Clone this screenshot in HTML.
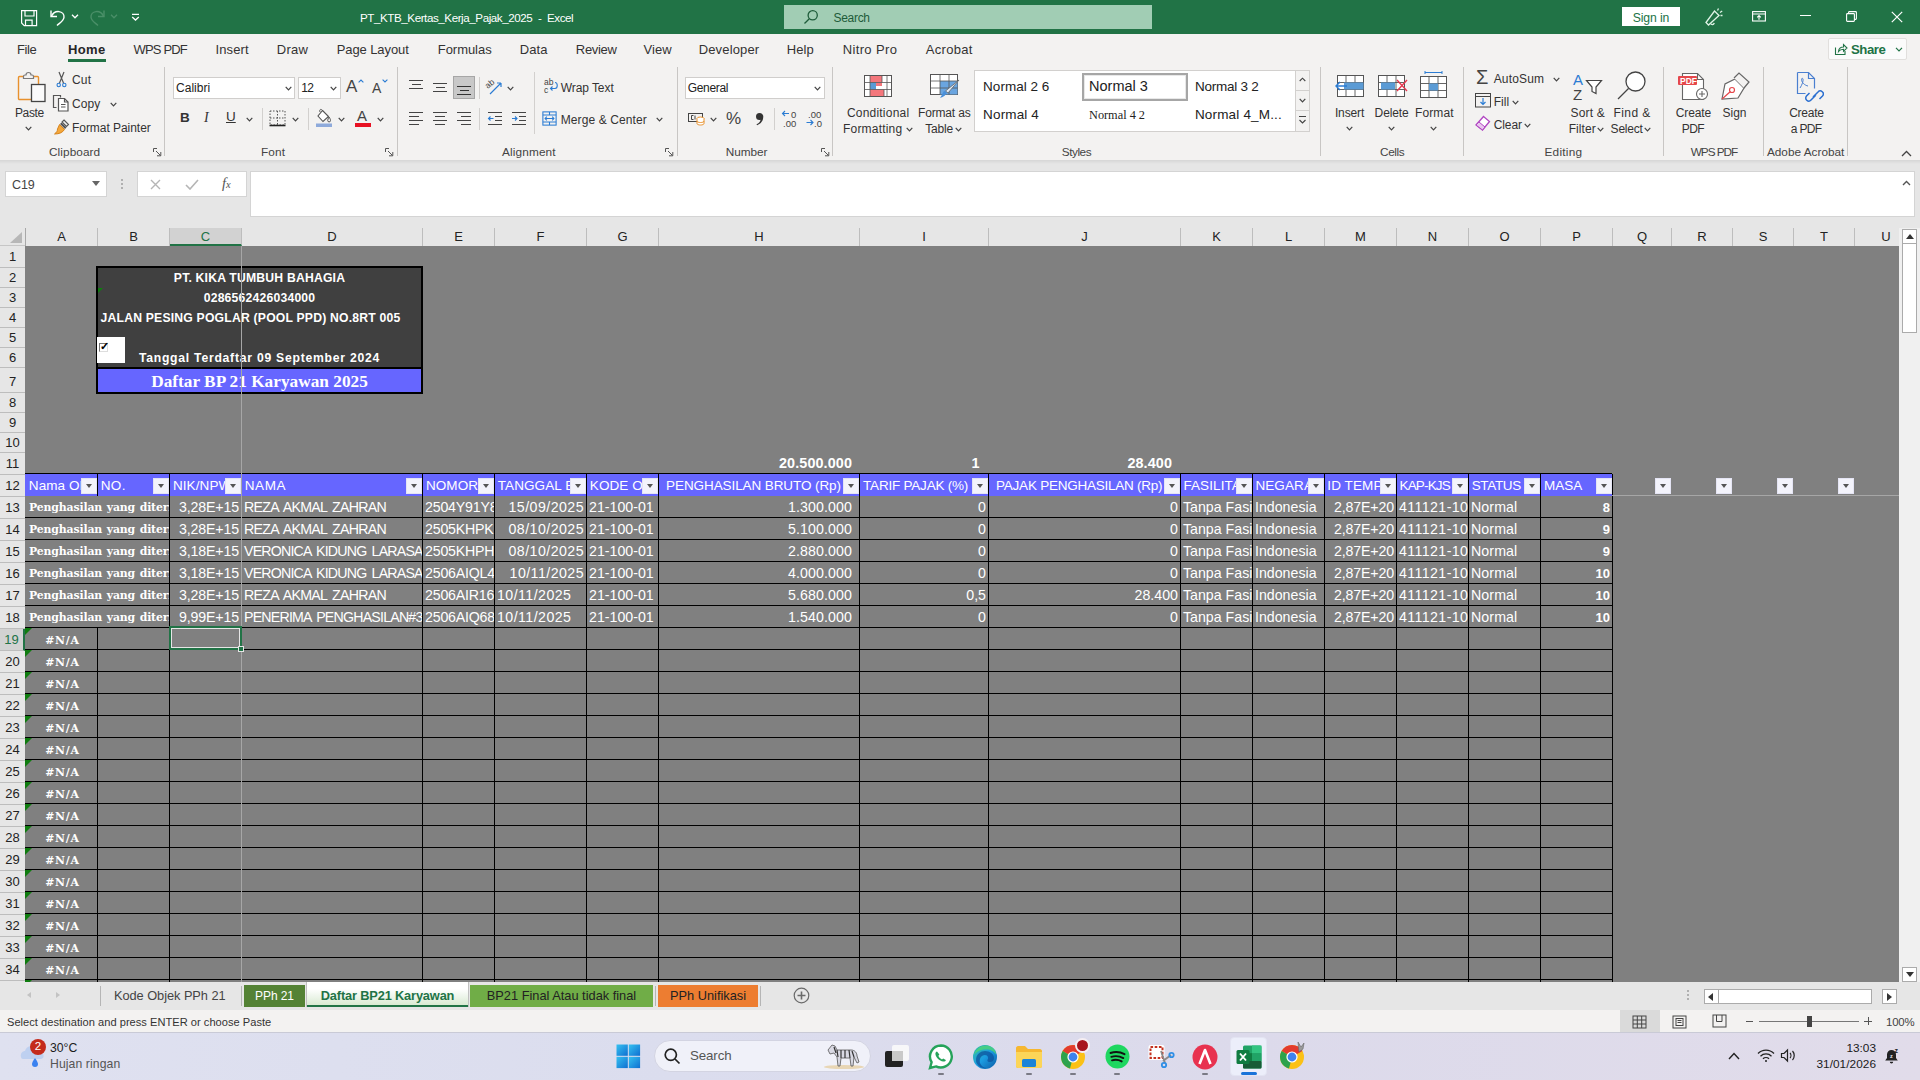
<!DOCTYPE html><html><head><meta charset="utf-8"><title>PT_KTB_Kertas_Kerja_Pajak_2025 - Excel</title><style>
*{box-sizing:border-box;margin:0;padding:0}
html,body{width:1920px;height:1080px;overflow:hidden;background:#808080}
body{font-family:"Liberation Sans",sans-serif;font-size:12px;color:#262626;position:relative}
.a{position:absolute}
.t{position:absolute;white-space:nowrap;line-height:1}
#titlebar{left:0;top:0;width:1920px;height:34px;background:#217346}
#menubar{left:0;top:34px;width:1920px;height:30px;background:#f3f2f1}
#ribbon{left:0;top:64px;width:1920px;height:97px;background:#f3f2f1}
#ribshadow{left:0;top:160px;width:1920px;height:4px;background:linear-gradient(#d6d6d6,#e6e6e6)}
#fbar{left:0;top:164px;width:1920px;height:64px;background:#e6e6e6}
#colhdr{left:0;top:228px;width:1899px;height:18px;background:#e6e6e6;overflow:hidden}
#rowhdr{left:0;top:246px;width:25px;height:736px;background:#e6e6e6}
#grid{left:25px;top:246px;width:1874px;height:736px;background:#808080;overflow:hidden}
#vscroll{left:1899px;top:228px;width:21px;height:754px;background:#f0f0f0}
#tabbar{left:0;top:982px;width:1920px;height:28px;background:#e6e6e6}
#status{left:0;top:1010px;width:1920px;height:23px;background:#f3f2f1}
#taskbar{left:0;top:1033px;width:1920px;height:47px;background:linear-gradient(90deg,#dfe1f0 0%,#dbddee 35%,#dcdaeb 65%,#e1dcea 100%)}
.mt{position:absolute;top:42px;font-size:13px;color:#333;white-space:nowrap;line-height:15px}
.rl{position:absolute;font-size:12px;color:#333;white-space:nowrap;line-height:14px}
.gl{position:absolute;top:145px;font-size:11.5px;color:#444;white-space:nowrap;line-height:14px;text-align:center}
.sep{position:absolute;top:67px;width:1px;height:89px;background:#c8c6c4}
.ch{position:absolute;top:0;margin-left:1px;height:18px;font-size:13px;color:#222;text-align:center;line-height:18px;border-right:1px solid #bdbdbd}
.rh{position:absolute;left:0;margin-top:1px;width:25px;font-size:13px;color:#222;text-align:center;border-bottom:1px solid #bdbdbd}
.c{position:absolute;overflow:hidden;white-space:nowrap;color:#fff;font-size:14.2px;letter-spacing:-0.45px;padding:0 2px 0 3px}
.cb{font-family:"DejaVu Serif",serif;font-weight:bold;font-size:10.9px;letter-spacing:-0.15px;word-spacing:1px}
.hl{position:absolute;height:1px;background:#000}
.vl{position:absolute;width:1px;background:#000}
.fb{position:absolute;width:16px;height:16px;background:#f3f3fb;border:1px solid #e4e4f4}
.fb:after{content:"";position:absolute;left:3.5px;top:5px;border:3.5px solid transparent;border-top:4px solid #555;border-bottom:0}
</style></head><body>
<div class="a" id="titlebar"></div>
<div class="a" id="menubar"></div>
<div class="a" id="ribbon"></div>
<div class="a" id="ribshadow"></div>
<div class="a" id="fbar"></div>
<div class="a" id="vscroll"></div>
<div class="a" id="tabbar"></div>
<div class="a" id="status"></div>
<div class="a" id="taskbar"></div>
<svg class="a" style="left:21px;top:10px" width="17" height="17" viewBox="0 0 17 17" fill="none" stroke="#fff" stroke-width="1.2"><path d="M.6 .6h15v15H3.2L.6 13z"/><path d="M4 .6v5.4h9V.6M4.5 15.6v-5.4h6.6v5.4"/></svg>
<svg class="a" style="left:49px;top:9px" width="18" height="18" viewBox="0 0 18 18" fill="none" stroke="#fff" stroke-width="1.4"><path d="M2 1.5v6h6"/><path d="M2.5 7.2C4 4 7 2.3 10 2.6c3.2.3 5.2 2.8 5 5.6-.3 3.4-4 5.5-7 8.3"/></svg>
<svg class="a" style="left:71px;top:14px" width="8" height="5" viewBox="0 0 8 5" fill="none" stroke="#fff" stroke-width="1.3"><path d="M1 .8l3 3 3-3"/></svg>
<svg class="a" style="left:88px;top:9px" width="18" height="18" viewBox="0 0 18 18" fill="none" stroke="#4a8f68" stroke-width="1.4"><path d="M16 1.5v6h-6"/><path d="M15.5 7.2C14 4 11 2.3 8 2.6c-3.2.3-5.2 2.8-5 5.6.3 3.4 4 5.5 7 8.3"/></svg>
<svg class="a" style="left:110px;top:14px" width="8" height="5" viewBox="0 0 8 5" fill="none" stroke="#4a8f68" stroke-width="1.3"><path d="M1 .8l3 3 3-3"/></svg>
<svg class="a" style="left:131px;top:13px" width="9" height="8" viewBox="0 0 9 8" fill="none" stroke="#fff" stroke-width="1.3"><path d="M1 1.3h7M1.2 4l3.3 3 3.3-3"/></svg>
<div class="t" style="left:360px;top:11.5px;width:213px;text-align:center;color:#fff;font-size:11.6px;letter-spacing:-0.42px">PT_KTB_Kertas_Kerja_Pajak_2025&nbsp; -&nbsp; Excel</div>
<div class="a" style="left:784px;top:5px;width:368px;height:24px;background:#a1cdb4"></div>
<svg class="a" style="left:803px;top:9px" width="16" height="16" viewBox="0 0 16 16" fill="none" stroke="#1e5c3a" stroke-width="1.3"><circle cx="9.7" cy="6.3" r="4.6"/><path d="M6.3 9.7L1.5 14.5"/></svg>
<div class="t" style="left:833.5px;top:11.5px;color:#1e5c3a;font-size:12px;letter-spacing:-0.3px">Search</div>
<div class="a" style="left:1622px;top:7px;width:58px;height:19px;background:#fff"></div>
<div class="t" style="left:1622px;top:11.8px;width:58px;text-align:center;color:#217346;font-size:12.2px;letter-spacing:-0.1px">Sign in</div>
<svg class="a" style="left:1703px;top:7px" width="22" height="20" viewBox="0 0 22 20" fill="none" stroke="#dff3e6" stroke-width="1.3"><path d="M3 15.5L11.5 4l4.5 4.5L5.5 18z"/><path d="M7.5 16.5c1 1.5 3 1.5 3.8-.5"/><path d="M14.5 3.5l1-2M17 5.5l2.2-1.5M17.5 8.5h2"/></svg>
<svg class="a" style="left:1751.5px;top:11px" width="14" height="11" viewBox="0 0 14 11" fill="none" stroke="#fff" stroke-width="1.1"><rect x=".6" y=".6" width="12.8" height="9.4"/><path d="M.6 3h12.8M7 8.8V4.6M5.2 6.3L7 4.5l1.8 1.8"/></svg>
<div class="a" style="left:1800px;top:15px;width:11px;height:1px;background:#fff"></div>
<svg class="a" style="left:1845.5px;top:10.5px" width="11" height="11" viewBox="0 0 11 11" fill="none" stroke="#fff" stroke-width="1.1"><rect x=".6" y="2.6" width="7.8" height="7.8" rx=".8"/><path d="M2.6 2.6V1.4c0-.5.3-.8.8-.8h6.2c.5 0 .8.3.8.8v6.2c0 .5-.3.8-.8.8H8.4"/></svg>
<svg class="a" style="left:1891px;top:10.5px" width="12" height="12" viewBox="0 0 12 12" fill="none" stroke="#fff" stroke-width="1.2"><path d="M.8 .8l10.4 10.4M11.2 .8L.8 11.2"/></svg>
<div class="mt" style="left:16.9px;letter-spacing:-0.363px;">File</div>
<div class="mt" style="left:68px;letter-spacing:0.394px;font-weight:bold;color:#262626;">Home</div>
<div class="mt" style="left:133.6px;letter-spacing:-0.848px;">WPS PDF</div>
<div class="mt" style="left:215.6px;letter-spacing:0.081px;">Insert</div>
<div class="mt" style="left:276.8px;letter-spacing:0.214px;">Draw</div>
<div class="mt" style="left:336.7px;letter-spacing:-0.092px;">Page Layout</div>
<div class="mt" style="left:437.8px;letter-spacing:-0.048px;">Formulas</div>
<div class="mt" style="left:519.8px;letter-spacing:0.083px;">Data</div>
<div class="mt" style="left:575.8px;letter-spacing:-0.304px;">Review</div>
<div class="mt" style="left:643.5px;letter-spacing:0.087px;">View</div>
<div class="mt" style="left:698.7px;letter-spacing:0.148px;">Developer</div>
<div class="mt" style="left:786.7px;letter-spacing:0.137px;">Help</div>
<div class="mt" style="left:842.7px;letter-spacing:0.367px;">Nitro Pro</div>
<div class="mt" style="left:925.8px;letter-spacing:0.284px;">Acrobat</div>
<div class="a" style="left:68px;top:59px;width:38px;height:3px;background:#217346"></div>
<div class="a" style="left:1828px;top:38px;width:79px;height:22px;background:#fbfbfb;border:1px solid #e1dfdd;border-radius:2px"></div>
<svg class="a" style="left:1834px;top:42px" width="14" height="14" viewBox="0 0 14 14" fill="none" stroke="#217346" stroke-width="1.1"><path d="M1.5 5.5v7h9.5v-3.5"/><path d="M4.5 9.5c.3-3 2-4.5 5-4.5V2.5L13 6 9.5 9.3V7.2c-2.2 0-3.8.6-5 2.3z"/></svg>
<div class="t" style="left:1851px;top:42.5px;font-size:13.2px;color:#217346;font-weight:bold;letter-spacing:-0.45px">Share</div>
<svg class="a" style="left:1895px;top:47px" width="8" height="5" viewBox="0 0 8 5" fill="none" stroke="#217346" stroke-width="1.2"><path d="M1 .8l3 3 3-3"/></svg>
<div class="sep" style="left:164px"></div>
<div class="sep" style="left:397px"></div>
<div class="sep" style="left:677px"></div>
<div class="sep" style="left:832px"></div>
<div class="sep" style="left:1320px"></div>
<div class="sep" style="left:1463px"></div>
<div class="sep" style="left:1663px"></div>
<div class="sep" style="left:1763px"></div>
<div class="sep" style="left:1847px"></div>
<div class="rl" style="left:49px;top:145px;font-size:11.8px;letter-spacing:0.078px;color:#444;">Clipboard</div>
<div class="rl" style="left:261px;top:145px;font-size:11.8px;letter-spacing:0.148px;color:#444;">Font</div>
<div class="rl" style="left:502px;top:145px;font-size:11.8px;letter-spacing:0.137px;color:#444;">Alignment</div>
<div class="rl" style="left:725.7px;top:145px;font-size:11.8px;letter-spacing:-0.028px;color:#444;">Number</div>
<div class="rl" style="left:1061.8px;top:145px;font-size:11.8px;letter-spacing:-0.471px;color:#444;">Styles</div>
<div class="rl" style="left:1380px;top:145px;font-size:11.8px;letter-spacing:-0.367px;color:#444;">Cells</div>
<div class="rl" style="left:1544.5px;top:145px;font-size:11.8px;letter-spacing:0.246px;color:#444;">Editing</div>
<div class="rl" style="left:1690.7px;top:145px;font-size:11.8px;letter-spacing:-1.021px;color:#444;">WPS PDF</div>
<div class="rl" style="left:1766.9px;top:145px;font-size:11.8px;letter-spacing:0.007px;color:#444;">Adobe Acrobat</div>
<svg class="a" style="left:153px;top:148px" width="9" height="9" viewBox="0 0 9 9" fill="none" stroke="#555" stroke-width="1"><path d="M.5 4V.5H4M3 3l4.5 4.5M7.8 4v3.8H4"/></svg>
<svg class="a" style="left:385px;top:148px" width="9" height="9" viewBox="0 0 9 9" fill="none" stroke="#555" stroke-width="1"><path d="M.5 4V.5H4M3 3l4.5 4.5M7.8 4v3.8H4"/></svg>
<svg class="a" style="left:665px;top:148px" width="9" height="9" viewBox="0 0 9 9" fill="none" stroke="#555" stroke-width="1"><path d="M.5 4V.5H4M3 3l4.5 4.5M7.8 4v3.8H4"/></svg>
<svg class="a" style="left:821px;top:148px" width="9" height="9" viewBox="0 0 9 9" fill="none" stroke="#555" stroke-width="1"><path d="M.5 4V.5H4M3 3l4.5 4.5M7.8 4v3.8H4"/></svg>
<svg class="a" style="left:1901px;top:150px" width="11" height="7" viewBox="0 0 11 7" fill="none" stroke="#444" stroke-width="1.3"><path d="M1 6l4.5-4.5L10 6"/></svg>
<svg class="a" style="left:15px;top:71px" width="33" height="35" viewBox="0 0 33 35"><rect x="3.5" y="5.5" width="20" height="23" rx="1" fill="none" stroke="#e8912d" stroke-width="1.4"/><path d="M8.5 5.5c0-1 .5-1.5 1.5-1.5h1c0-1.5 1-2.5 2.5-2.5S16 2.5 16 4h1c1 0 1.5.5 1.5 1.5v2h-10z" fill="#f3f2f1" stroke="#7a7a7a" stroke-width="1.2"/><rect x="16.5" y="13.5" width="13.5" height="17" fill="#fafafa" stroke="#444" stroke-width="1.3"/></svg>
<div class="rl" style="left:15px;top:106px;font-size:12px;letter-spacing:-0.398px;color:#333;">Paste</div>
<svg class="a" style="left:25px;top:126px" width="7" height="5" viewBox="0 0 7 5" fill="none" stroke="#444" stroke-width="1.2"><path d="M.7 .8l2.8 3 2.8 -3"/></svg>
<svg class="a" style="left:55px;top:71px" width="13" height="18" viewBox="0 0 13 18" fill="none"><path d="M4 1l4.5 11M9 1L4.5 12" stroke="#555" stroke-width="1.2"/><circle cx="3.7" cy="14" r="1.7" stroke="#2b7cd3" stroke-width="1.1"/><circle cx="9.3" cy="14" r="1.7" stroke="#2b7cd3" stroke-width="1.1"/></svg>
<div class="rl" style="left:72px;top:73px;font-size:12px;letter-spacing:0.171px;color:#333;">Cut</div>
<svg class="a" style="left:52px;top:94px" width="18" height="18" viewBox="0 0 18 18" fill="none" stroke="#555" stroke-width="1.2"><path d="M4.5 13.5h-3v-12h7l0 2"/><path d="M6.5 4.5h6l3.5 3.5v9h-9.5z" fill="#fff"/><path d="M12.5 4.5v3.5h3.5M9 10.5h4.5M9 13h4.5"/></svg>
<div class="rl" style="left:72px;top:97px;font-size:12px;letter-spacing:0.046px;color:#333;">Copy</div>
<svg class="a" style="left:110px;top:102px" width="7" height="5" viewBox="0 0 7 5" fill="none" stroke="#444" stroke-width="1.2"><path d="M.7 .8l2.8 3 2.8 -3"/></svg>
<svg class="a" style="left:53px;top:118px" width="18" height="18" viewBox="0 0 18 18"><path d="M11 2l4.5 4.5-2 2L9 4z" fill="#f3f2f1" stroke="#555" stroke-width="1.1"/><path d="M8.5 4.5l5 5-1.5 1.5-5-5z" fill="#555"/><path d="M6.5 6.5l5 5c-2 3-5 4.5-10 4.5 2-1.5 3-3 3-5z" fill="#f4a73b" stroke="#d07c13" stroke-width=".9"/></svg>
<div class="rl" style="left:72px;top:121px;font-size:12px;letter-spacing:-0.047px;color:#333;">Format Painter</div>
<div class="a" style="left:173px;top:77px;width:122px;height:22px;background:#fff;border:1px solid #d0cecc"></div>
<div class="rl" style="left:176px;top:81px;font-size:12px;letter-spacing:0.026px;color:#222;">Calibri</div>
<svg class="a" style="left:285px;top:86px" width="7" height="5" viewBox="0 0 7 5" fill="none" stroke="#444" stroke-width="1.2"><path d="M.7 .8l2.8 3 2.8 -3"/></svg>
<div class="a" style="left:298px;top:77px;width:43px;height:22px;background:#fff;border:1px solid #d0cecc"></div>
<div class="rl" style="left:301.3px;top:81px;font-size:12px;letter-spacing:-0.73px;color:#222;">12</div>
<svg class="a" style="left:330px;top:86px" width="7" height="5" viewBox="0 0 7 5" fill="none" stroke="#444" stroke-width="1.2"><path d="M.7 .8l2.8 3 2.8 -3"/></svg>
<div class="t" style="left:346px;top:78px;font-size:17px;color:#444">A</div>
<svg class="a" style="left:358px;top:79px" width="6" height="4" viewBox="0 0 6 4" fill="none" stroke="#2b7cd3" stroke-width="1.1"><path d="M.6 3.4L3 1l2.4 2.4"/></svg>
<div class="t" style="left:372px;top:81px;font-size:14px;color:#444">A</div>
<svg class="a" style="left:382px;top:79px" width="6" height="4" viewBox="0 0 6 4" fill="none" stroke="#2b7cd3" stroke-width="1.1"><path d="M.6 .6L3 3l2.4-2.4"/></svg>
<div class="t" style="left:179px;top:111px;font-size:13.5px;font-weight:bold;color:#333;margin-left:1px">B</div>
<div class="t" style="left:204px;top:111px;font-size:14px;font-style:italic;color:#333;font-family:'Liberation Serif',serif">I</div>
<div class="t" style="left:226px;top:110px;font-size:13.5px;color:#333;text-decoration:underline">U</div>
<svg class="a" style="left:246px;top:117px" width="7" height="5" viewBox="0 0 7 5" fill="none" stroke="#444" stroke-width="1.2"><path d="M.7 .8l2.8 3 2.8 -3"/></svg>
<div class="a" style="left:262px;top:108px;width:1px;height:22px;background:#d2d0ce"></div>
<svg class="a" style="left:269px;top:110px" width="17" height="17" viewBox="0 0 17 17" fill="none" stroke="#555" stroke-width="1"><path d="M1 1h15v14H1z" stroke-dasharray="1.5 1.5"/><path d="M8.5 1v14M1 8h15" stroke-dasharray="1.5 1.5"/><path d="M0.5 15.5h16" stroke="#222" stroke-width="1.6" stroke-dasharray="none"/></svg>
<svg class="a" style="left:292px;top:117px" width="7" height="5" viewBox="0 0 7 5" fill="none" stroke="#444" stroke-width="1.2"><path d="M.7 .8l2.8 3 2.8 -3"/></svg>
<div class="a" style="left:308px;top:108px;width:1px;height:22px;background:#d2d0ce"></div>
<svg class="a" style="left:315px;top:108px" width="18" height="20" viewBox="0 0 18 20"><path d="M7.5 2.5l6 6-5.5 5-5-5.5z" fill="#fff" stroke="#555" stroke-width="1.1"/><path d="M7.5 2.5c-1.5-2-3.5-1-2.5 1.5M14 9c1 1.5 1.5 2.5 1.5 3.5a1.4 1.4 0 0 1-2.8 0c0-1 .5-2 1.3-3.5z" fill="none" stroke="#555" stroke-width="1"/><rect x="1" y="15.5" width="16" height="3.5" fill="#8eaadb"/></svg>
<svg class="a" style="left:338px;top:117px" width="7" height="5" viewBox="0 0 7 5" fill="none" stroke="#444" stroke-width="1.2"><path d="M.7 .8l2.8 3 2.8 -3"/></svg>
<div class="t" style="left:357px;top:108px;font-size:15px;color:#444">A</div>
<div class="a" style="left:355px;top:123px;width:16px;height:4px;background:#e81123"></div>
<svg class="a" style="left:377px;top:117px" width="7" height="5" viewBox="0 0 7 5" fill="none" stroke="#444" stroke-width="1.2"><path d="M.7 .8l2.8 3 2.8 -3"/></svg>
<div class="a" style="left:409px;top:80px;width:14px;height:1px;background:#444"></div><div class="a" style="left:411.5px;top:84px;width:9px;height:1px;background:#444"></div><div class="a" style="left:409px;top:88px;width:14px;height:1px;background:#444"></div>
<div class="a" style="left:433px;top:83px;width:14px;height:1px;background:#444"></div><div class="a" style="left:435.5px;top:87px;width:9px;height:1px;background:#444"></div><div class="a" style="left:433px;top:91px;width:14px;height:1px;background:#444"></div>
<div class="a" style="left:453px;top:76px;width:22px;height:23px;background:#c8c8c8;border:1px solid #a6a6a6"></div>
<div class="a" style="left:457px;top:86px;width:14px;height:1px;background:#333"></div><div class="a" style="left:459.5px;top:90px;width:9px;height:1px;background:#333"></div><div class="a" style="left:457px;top:94px;width:14px;height:1px;background:#333"></div>
<div class="a" style="left:479px;top:77px;width:1px;height:22px;background:#d2d0ce"></div>
<svg class="a" style="left:485px;top:77px" width="19" height="19" viewBox="0 0 19 19" fill="none"><text x="1" y="9" font-size="8.5" font-family="Liberation Sans,sans-serif" fill="#444" transform="rotate(-40 6 8)">ab</text><path d="M5 17L16 6M16 6h-4M16 6v4" stroke="#2b7cd3" stroke-width="1.2"/></svg>
<svg class="a" style="left:507px;top:86px" width="7" height="5" viewBox="0 0 7 5" fill="none" stroke="#444" stroke-width="1.2"><path d="M.7 .8l2.8 3 2.8 -3"/></svg>
<div class="a" style="left:534px;top:72px;width:1px;height:62px;background:#d2d0ce"></div>
<svg class="a" style="left:543px;top:78px" width="17" height="17" viewBox="0 0 17 17" fill="none"><text x="1" y="7" font-size="8.5" font-family="Liberation Sans,sans-serif" fill="#444">ab</text><text x="1" y="15" font-size="8.5" font-family="Liberation Sans,sans-serif" fill="#444">c</text><path d="M12 4.5c3 0 3 6 0 6H7.5M9.5 8.5l-2 2 2 2" stroke="#2b7cd3" stroke-width="1.1"/></svg>
<div class="rl" style="left:560.7px;top:81px;font-size:12px;letter-spacing:-0.064px;color:#333;">Wrap Text</div>
<div class="a" style="left:409px;top:112px;width:14px;height:1px;background:#444"></div><div class="a" style="left:409px;top:116px;width:10px;height:1px;background:#444"></div><div class="a" style="left:409px;top:120px;width:14px;height:1px;background:#444"></div><div class="a" style="left:409px;top:124px;width:10px;height:1px;background:#444"></div>
<div class="a" style="left:433px;top:112px;width:14px;height:1px;background:#444"></div><div class="a" style="left:435px;top:116px;width:10px;height:1px;background:#444"></div><div class="a" style="left:433px;top:120px;width:14px;height:1px;background:#444"></div><div class="a" style="left:435px;top:124px;width:10px;height:1px;background:#444"></div>
<div class="a" style="left:457px;top:112px;width:14px;height:1px;background:#444"></div><div class="a" style="left:461px;top:116px;width:10px;height:1px;background:#444"></div><div class="a" style="left:457px;top:120px;width:14px;height:1px;background:#444"></div><div class="a" style="left:461px;top:124px;width:10px;height:1px;background:#444"></div>
<div class="a" style="left:479px;top:108px;width:1px;height:22px;background:#d2d0ce"></div>
<svg class="a" style="left:487px;top:111px" width="16" height="15" viewBox="0 0 16 15" fill="none" stroke="#444" stroke-width="1"><path d="M1 1.5h14M8 5.5h7M8 9.5h7M1 13.5h14"/><path d="M6.5 7.5h-5M3.5 5.5l-2 2 2 2" stroke="#2b7cd3" stroke-width="1.1"/></svg>
<svg class="a" style="left:511px;top:111px" width="16" height="15" viewBox="0 0 16 15" fill="none" stroke="#444" stroke-width="1"><path d="M1 1.5h14M8 5.5h7M8 9.5h7M1 13.5h14"/><path d="M1 7.5h5M4 5.5l2 2-2 2" stroke="#2b7cd3" stroke-width="1.1"/></svg>
<svg class="a" style="left:542px;top:111px" width="15" height="15" viewBox="0 0 17 17" fill="none" stroke="#2b7cd3" stroke-width="1.2"><rect x="1" y="1" width="15" height="15"/><path d="M1 4.5h15M1 12.5h15M8.5 1v3.5M8.5 12.5V16"/><path d="M3.5 8.5h10M5.5 6.5l-2 2 2 2M11.5 6.5l2 2-2 2"/></svg>
<div class="rl" style="left:560.7px;top:113px;font-size:12px;letter-spacing:0.107px;color:#333;">Merge &amp; Center</div>
<svg class="a" style="left:656px;top:117px" width="7" height="5" viewBox="0 0 7 5" fill="none" stroke="#444" stroke-width="1.2"><path d="M.7 .8l2.8 3 2.8 -3"/></svg>
<div class="a" style="left:685px;top:77px;width:140px;height:22px;background:#fff;border:1px solid #d0cecc"></div>
<div class="rl" style="left:687.7px;top:81px;font-size:12px;letter-spacing:-0.315px;color:#222;">General</div>
<svg class="a" style="left:814px;top:86px" width="7" height="5" viewBox="0 0 7 5" fill="none" stroke="#444" stroke-width="1.2"><path d="M.7 .8l2.8 3 2.8 -3"/></svg>
<svg class="a" style="left:688px;top:111px" width="18" height="16" viewBox="0 0 18 16" fill="none"><rect x=".5" y="2.5" width="14" height="8" stroke="#444" stroke-width="1"/><path d="M5.5 4.5h-2v4h2M7 8.5v-4" stroke="#444" stroke-width="1"/><ellipse cx="12.5" cy="7.5" rx="3.5" ry="1.5" fill="#fff" stroke="#e8912d" stroke-width="1"/><path d="M9 7.5v5c0 2 7 2 7 0v-5M9 10c0 2 7 2 7 0" stroke="#e8912d" stroke-width="1" fill="#fff"/></svg>
<svg class="a" style="left:710px;top:117px" width="7" height="5" viewBox="0 0 7 5" fill="none" stroke="#444" stroke-width="1.2"><path d="M.7 .8l2.8 3 2.8 -3"/></svg>
<div class="t" style="left:726px;top:110px;font-size:17px;color:#444">%</div>
<svg class="a" style="left:754px;top:112px" width="11" height="14" viewBox="0 0 11 14"><path d="M5.5 1a3.5 3.5 0 0 0 0 7c.4 0 .8 0 1.1-.2C6.1 9.8 4.8 11.3 2.5 12.3l.6 1C7 11.8 9.3 8.5 9.3 4.8 9.3 2.5 7.7 1 5.5 1z" fill="#333"/></svg>
<div class="a" style="left:774px;top:108px;width:1px;height:22px;background:#d2d0ce"></div>
<svg class="a" style="left:781px;top:110px" width="18" height="17" viewBox="0 0 18 17" fill="none"><path d="M8 3.5H1.5M4 1L1.5 3.5 4 6" stroke="#2b7cd3" stroke-width="1.1"/><text x="10" y="7.5" font-size="9.5" font-family="Liberation Sans,sans-serif" fill="#444">0</text><text x="2" y="16.5" font-size="9.5" font-family="Liberation Sans,sans-serif" fill="#444">.00</text></svg>
<svg class="a" style="left:805px;top:110px" width="18" height="17" viewBox="0 0 18 17" fill="none"><text x="3" y="7.5" font-size="9.5" font-family="Liberation Sans,sans-serif" fill="#444">.00</text><path d="M1.5 12.5H8M5.5 10L8 12.5 5.5 15" stroke="#2b7cd3" stroke-width="1.1"/><text x="9" y="16.5" font-size="9.5" font-family="Liberation Sans,sans-serif" fill="#444">.0</text></svg>
<svg class="a" style="left:864px;top:75px" width="29" height="23" viewBox="0 0 29 23"><rect x=".5" y=".5" width="27" height="21" fill="#fff" stroke="#555" stroke-width="1"/><rect x="6" y="1" width="12" height="6.5" fill="#f4777c"/><rect x="6" y="7.5" width="6" height="7" fill="#5b9bd5"/><rect x="12" y="7.5" width="6" height="3.5" fill="#f4777c"/><rect x="6" y="14.5" width="14" height="6.5" fill="#f4777c"/><path d="M.5 7.5h27M.5 14.5h27M6 .5v21M18 .5v7M20 14.5v6.5M23 .5v21" stroke="#555" stroke-width=".8" fill="none"/></svg>
<div class="rl" style="left:846.9px;top:106px;font-size:12px;letter-spacing:0.214px;color:#333;">Conditional</div>
<div class="rl" style="left:843px;top:122px;font-size:12px;letter-spacing:0.194px;color:#333;">Formatting</div>
<svg class="a" style="left:906px;top:127px" width="7" height="5" viewBox="0 0 7 5" fill="none" stroke="#444" stroke-width="1.2"><path d="M.7 .8l2.8 3 2.8 -3"/></svg>
<svg class="a" style="left:930px;top:74px" width="31" height="28" viewBox="0 0 31 28"><rect x=".5" y=".5" width="27" height="20" fill="#fff" stroke="#555" stroke-width="1"/><rect x="10" y="7" width="17.5" height="13.5" fill="#6aa5e0"/><path d="M.5 7h27M.5 14h27M10 .5v20M19 .5v20" stroke="#555" stroke-width=".8" fill="none"/><path d="M29 6L18 19l-2.5-2z" fill="#dfe9f5" stroke="#666" stroke-width=".8"/><path d="M17 18c-1 3-3 5-7 6 1.5-2 2-4 4-7z" fill="#4a90d9"/></svg>
<div class="rl" style="left:918px;top:106px;font-size:12px;letter-spacing:-0.168px;color:#333;">Format as</div>
<div class="rl" style="left:925.3px;top:122px;font-size:12px;letter-spacing:-0.177px;color:#333;">Table</div>
<svg class="a" style="left:955px;top:127px" width="7" height="5" viewBox="0 0 7 5" fill="none" stroke="#444" stroke-width="1.2"><path d="M.7 .8l2.8 3 2.8 -3"/></svg>
<div class="a" style="left:974px;top:70px;width:336px;height:62px;background:#fff;border:1px solid #d2d0ce"></div>
<div class="a" style="left:1082px;top:73px;width:106px;height:28px;border:2px solid #a6a6a6;box-shadow:inset 0 0 0 1px #e8e8e8;background:#fff"></div>
<div class="rl" style="left:983.1px;top:80px;font-size:13.5px;letter-spacing:0.027px;color:#222;">Normal 2 6</div>
<div class="rl" style="left:1089.1px;top:79px;font-size:14.5px;letter-spacing:-0.004px;color:#222;">Normal 3</div>
<div class="rl" style="left:1194.9px;top:80px;font-size:13.5px;letter-spacing:-0.233px;color:#222;">Normal 3 2</div>
<div class="rl" style="left:983.1px;top:108px;font-size:13.5px;letter-spacing:0.142px;color:#222;">Normal 4</div>
<div class="rl" style="left:1194.9px;top:108px;font-size:13.5px;letter-spacing:0.178px;color:#222;">Normal 4_M...</div>
<div class="t" style="left:1089px;top:109px;font-size:12.3px;color:#222;font-family:'Liberation Serif',serif">Normal 4 2</div>
<div class="a" style="left:1295px;top:70px;width:15px;height:62px;background:#f3f2f1;border:1px solid #d2d0ce"></div>
<div class="a" style="left:1295px;top:90px;width:15px;height:1px;background:#d2d0ce"></div>
<div class="a" style="left:1295px;top:110px;width:15px;height:1px;background:#d2d0ce"></div>
<svg class="a" style="left:1299px;top:77px" width="7" height="5" viewBox="0 0 7 5" fill="none" stroke="#444" stroke-width="1.1"><path d="M.7 4l2.8-2.8L6.3 4"/></svg>
<svg class="a" style="left:1299px;top:98px" width="7" height="5" viewBox="0 0 7 5" fill="none" stroke="#444" stroke-width="1.2"><path d="M.7 .8l2.8 3 2.8 -3"/></svg>
<svg class="a" style="left:1298px;top:115px" width="9" height="10" viewBox="0 0 9 10" fill="none" stroke="#444" stroke-width="1.1"><path d="M1 1.5h7M1.5 5l3 3 3-3"/></svg>
<svg class="a" style="left:1335px;top:75px" width="30" height="24" viewBox="0 0 30 24"><rect x="2.5" y=".5" width="26" height="21" fill="#fff" stroke="#555" stroke-width="1"/><path d="M2.5 7.5h26M2.5 14.5h26M11 .5v21M20 .5v21" stroke="#555" stroke-width=".9" fill="none"/><rect x="9" y="7.5" width="19.5" height="7" fill="#5b9bd5"/><path d="M12 11H1.5M5 7L1 11l4 4" stroke="#2b7cd3" stroke-width="1.5" fill="none"/></svg>
<svg class="a" style="left:1377.5px;top:75px" width="31" height="24" viewBox="0 0 31 24"><rect x=".5" y=".5" width="26" height="21" fill="#fff" stroke="#555" stroke-width="1"/><path d="M.5 7.5h26M.5 14.5h26M9 .5v21M18 .5v21" stroke="#555" stroke-width=".9" fill="none"/><rect x="3" y="7.5" width="14" height="7" fill="#5b9bd5"/><path d="M19 5l10 11M29 5L19 16" stroke="#e8384f" stroke-width="1.4"/></svg>
<svg class="a" style="left:1419px;top:69.5px" width="30" height="29" viewBox="0 0 30 29"><path d="M6 1v3M23 1v3M6 2.5h17" stroke="#2b7cd3" stroke-width="1" fill="none"/><rect x="1.5" y="6.5" width="26" height="21" fill="#fff" stroke="#555" stroke-width="1"/><path d="M1.5 13.5h26M1.5 20.5h26M10 6.5v21M19 6.5v21" stroke="#555" stroke-width=".9" fill="none"/><rect x="10" y="13.5" width="9" height="7" fill="#5b9bd5"/></svg>
<div class="rl" style="left:1334.9px;top:106px;font-size:12px;letter-spacing:-0.136px;color:#333;">Insert</div>
<svg class="a" style="left:1346px;top:126px" width="7" height="5" viewBox="0 0 7 5" fill="none" stroke="#444" stroke-width="1.2"><path d="M.7 .8l2.8 3 2.8 -3"/></svg>
<div class="rl" style="left:1374.6px;top:106px;font-size:12px;letter-spacing:-0.131px;color:#333;">Delete</div>
<svg class="a" style="left:1388px;top:126px" width="7" height="5" viewBox="0 0 7 5" fill="none" stroke="#444" stroke-width="1.2"><path d="M.7 .8l2.8 3 2.8 -3"/></svg>
<div class="rl" style="left:1415px;top:106px;font-size:12px;letter-spacing:0.097px;color:#333;">Format</div>
<svg class="a" style="left:1430px;top:126px" width="7" height="5" viewBox="0 0 7 5" fill="none" stroke="#444" stroke-width="1.2"><path d="M.7 .8l2.8 3 2.8 -3"/></svg>
<div class="t" style="left:1476px;top:67px;font-size:20px;color:#444">&Sigma;</div>
<div class="rl" style="left:1493.7px;top:72px;font-size:12px;letter-spacing:0.163px;color:#333;">AutoSum</div>
<svg class="a" style="left:1553px;top:77px" width="7" height="5" viewBox="0 0 7 5" fill="none" stroke="#444" stroke-width="1.2"><path d="M.7 .8l2.8 3 2.8 -3"/></svg>
<svg class="a" style="left:1475px;top:93px" width="16" height="15" viewBox="0 0 16 15" fill="none"><rect x=".5" y=".5" width="15" height="13.5" stroke="#444" stroke-width="1"/><path d="M.5 3.5h15" stroke="#444"/><path d="M8 5v6.5M5.5 9L8 11.5 10.5 9" stroke="#2b7cd3" stroke-width="1.2"/></svg>
<div class="rl" style="left:1493.7px;top:95px;font-size:12px;letter-spacing:0.043px;color:#333;">Fill</div>
<svg class="a" style="left:1512px;top:100px" width="7" height="5" viewBox="0 0 7 5" fill="none" stroke="#444" stroke-width="1.2"><path d="M.7 .8l2.8 3 2.8 -3"/></svg>
<svg class="a" style="left:1474px;top:115px" width="17" height="17" viewBox="0 0 17 17" fill="none"><path d="M9.5 1.5l6 5-7 8.5-6.5-5z" stroke="#b146c2" stroke-width="1.3" fill="#fff"/><path d="M5 7l6 5-2.5 3-6.5-5z" fill="#e9c6ee" stroke="#b146c2" stroke-width="1"/></svg>
<div class="rl" style="left:1493.7px;top:118px;font-size:12px;letter-spacing:-0.098px;color:#333;">Clear</div>
<svg class="a" style="left:1524px;top:123px" width="7" height="5" viewBox="0 0 7 5" fill="none" stroke="#444" stroke-width="1.2"><path d="M.7 .8l2.8 3 2.8 -3"/></svg>
<svg class="a" style="left:1572px;top:71px" width="32" height="30" viewBox="0 0 32 30" fill="none"><text x="1" y="14" font-size="15" font-family="Liberation Sans,sans-serif" fill="#2b7cd3">A</text><text x="1" y="29" font-size="15" font-family="Liberation Sans,sans-serif" fill="#444">Z</text><path d="M14.5 9.5h15l-5.5 6.5v6.5l-4 -2v-4.5z" stroke="#444" stroke-width="1.2" fill="#fff"/></svg>
<div class="rl" style="left:1570.6px;top:106px;font-size:12px;letter-spacing:0.157px;color:#333;">Sort &amp;</div>
<div class="rl" style="left:1568.7px;top:122px;font-size:12px;letter-spacing:0.055px;color:#333;">Filter</div>
<svg class="a" style="left:1597px;top:127px" width="7" height="5" viewBox="0 0 7 5" fill="none" stroke="#444" stroke-width="1.2"><path d="M.7 .8l2.8 3 2.8 -3"/></svg>
<svg class="a" style="left:1616px;top:70px" width="32" height="32" viewBox="0 0 32 32" fill="none" stroke="#444" stroke-width="1.3"><circle cx="19.5" cy="11.5" r="9.5" fill="#fff"/><path d="M12.5 18.5L2 29"/></svg>
<div class="rl" style="left:1613.5px;top:106px;font-size:12px;letter-spacing:0.402px;color:#333;">Find &amp;</div>
<div class="rl" style="left:1610.6px;top:122px;font-size:12px;letter-spacing:-0.21px;color:#333;">Select</div>
<svg class="a" style="left:1644px;top:127px" width="7" height="5" viewBox="0 0 7 5" fill="none" stroke="#444" stroke-width="1.2"><path d="M.7 .8l2.8 3 2.8 -3"/></svg>
<svg class="a" style="left:1677px;top:71px" width="34" height="32" viewBox="0 0 34 32" fill="none"><path d="M5.5 2.5h15l6 6v20h-21z" fill="#fff" stroke="#666" stroke-width="1.1"/><path d="M20.5 2.5v6h6" stroke="#666" stroke-width="1.1"/><rect x="1" y="5" width="19" height="9" rx="1" fill="#e5474b"/><text x="3" y="12.5" font-size="8.5" font-weight="bold" font-family="Liberation Sans,sans-serif" fill="#fff">PDF</text><circle cx="25" cy="23" r="5.5" fill="#fff" stroke="#666" stroke-width="1.1"/><path d="M25 20v6M22 23h6" stroke="#666" stroke-width="1.1"/></svg>
<div class="rl" style="left:1675.8px;top:106px;font-size:12px;letter-spacing:-0.139px;color:#333;">Create</div>
<div class="rl" style="left:1681.8px;top:122px;font-size:12px;letter-spacing:-0.6px;color:#333;">PDF</div>
<svg class="a" style="left:1719px;top:71px" width="32" height="32" viewBox="0 0 32 32" fill="none"><path d="M3 28l3-15 10-5 9 9-6 10z" fill="#fff" stroke="#666" stroke-width="1.2"/><path d="M15 7l5-5 10 9-5 6" stroke="#666" stroke-width="1.2" fill="#f3f2f1"/><circle cx="13" cy="19" r="2.5" stroke="#e5474b" stroke-width="1.2"/><path d="M3 28l8.5-7.5" stroke="#e5474b" stroke-width="1.2"/></svg>
<div class="rl" style="left:1722.5px;top:106px;font-size:12px;letter-spacing:-0.008px;color:#333;">Sign</div>
<svg class="a" style="left:1790px;top:70px" width="34" height="34" viewBox="0 0 34 34" fill="none"><path d="M7.5 2.5h11l6 6v10M7.5 2.5v21h8" stroke="#4a7fd0" stroke-width="1.2"/><path d="M18.5 2.5v6h6" stroke="#4a7fd0" stroke-width="1.2"/><path d="M10 18c2-3 3.5-7 3-9-.3-1-1.5-1-1.5.5 0 3 3.5 6 6.5 6.5" stroke="#4a7fd0" stroke-width="1"/><path d="M21 25l5-5a3 3 0 0 1 4.5 4l-3 3M24 23l-5 5a3 3 0 0 1-4.5-4l3-3" stroke="#2b6fd0" stroke-width="1.5" transform="translate(2 2)"/></svg>
<div class="rl" style="left:1789.2px;top:106px;font-size:12px;letter-spacing:-0.255px;color:#333;">Create</div>
<div class="rl" style="left:1790.8px;top:122px;font-size:12px;letter-spacing:-0.663px;color:#333;">a PDF</div>
<div class="a" style="left:5px;top:171px;width:102px;height:26px;background:#fff;border:1px solid #d4d4d4"></div>
<div class="t" style="left:12px;top:178.5px;font-size:12.5px;color:#444;letter-spacing:-0.1px">C19</div>
<div class="a" style="left:92px;top:181px;width:0;height:0;border:4px solid transparent;border-top:5px solid #666;border-bottom:0"></div>
<div class="a" style="left:121px;top:179px;width:2px;height:2px;background:#b0b0b0"></div>
<div class="a" style="left:121px;top:183px;width:2px;height:2px;background:#b0b0b0"></div>
<div class="a" style="left:121px;top:187px;width:2px;height:2px;background:#b0b0b0"></div>
<div class="a" style="left:137px;top:171px;width:110px;height:26px;background:#fff;border:1px solid #d4d4d4"></div>
<svg class="a" style="left:150px;top:179px" width="11" height="11" viewBox="0 0 11 11" fill="none" stroke="#b5b5b5" stroke-width="1.4"><path d="M1 1l9 9M10 1L1 10"/></svg>
<svg class="a" style="left:185px;top:179px" width="14" height="11" viewBox="0 0 14 11" fill="none" stroke="#b5b5b5" stroke-width="1.6"><path d="M1 6l4 4L13 1"/></svg>
<div class="t" style="left:222px;top:176px;font-size:14.5px;color:#555;font-family:'Liberation Serif',serif;font-style:italic">f<span style="font-size:10.5px">x</span></div>
<div class="a" style="left:250px;top:171px;width:1665px;height:46px;background:#fff;border:1px solid #d4d4d4"></div>
<svg class="a" style="left:1902px;top:180px" width="9" height="6" viewBox="0 0 9 6" fill="none" stroke="#555" stroke-width="1.4"><path d="M1 5l3.5-3.5L8 5"/></svg>
<div class="a" id="colhdr">
<div class="a" style="left:10px;top:4px;width:0;height:0;border-left:12px solid transparent;border-bottom:11px solid #b7b7b7"></div>
<div class="a" style="left:0;top:17px;width:25px;height:1px;background:#c6c6c6"></div>
<div class="a" style="left:25px;top:0;width:1px;height:18px;background:#a8a8a8"></div>
<div class="ch" style="left:25px;width:72px;">A</div>
<div class="ch" style="left:97px;width:72px;">B</div>
<div class="ch" style="left:169px;width:72px;background:#d2d2d2;color:#217346;border-bottom:2px solid #217346;">C</div>
<div class="ch" style="left:241px;width:181px;">D</div>
<div class="ch" style="left:422px;width:72px;">E</div>
<div class="ch" style="left:494px;width:92px;">F</div>
<div class="ch" style="left:586px;width:72px;">G</div>
<div class="ch" style="left:658px;width:201px;">H</div>
<div class="ch" style="left:859px;width:129px;">I</div>
<div class="ch" style="left:988px;width:192px;">J</div>
<div class="ch" style="left:1180px;width:72px;">K</div>
<div class="ch" style="left:1252px;width:72px;">L</div>
<div class="ch" style="left:1324px;width:72px;">M</div>
<div class="ch" style="left:1396px;width:72px;">N</div>
<div class="ch" style="left:1468px;width:72px;">O</div>
<div class="ch" style="left:1540px;width:72px;">P</div>
<div class="ch" style="left:1612px;width:59px;">Q</div>
<div class="ch" style="left:1671px;width:61px;">R</div>
<div class="ch" style="left:1732px;width:61px;">S</div>
<div class="ch" style="left:1793px;width:61px;">T</div>
<div class="ch" style="left:1854px;width:62px;border-right:0;">U</div>
</div>
<div class="a" id="rowhdr">
<div class="rh" style="top:0px;height:21px;padding-top:0px;line-height:20px;">1</div>
<div class="rh" style="top:21px;height:20px;padding-top:-1px;line-height:20px;">2</div>
<div class="rh" style="top:41px;height:20px;padding-top:-1px;line-height:20px;">3</div>
<div class="rh" style="top:61px;height:20px;padding-top:-1px;line-height:20px;">4</div>
<div class="rh" style="top:81px;height:20px;padding-top:-1px;line-height:20px;">5</div>
<div class="rh" style="top:101px;height:20px;padding-top:-1px;line-height:20px;">6</div>
<div class="rh" style="top:121px;height:25px;padding-top:4px;line-height:20px;">7</div>
<div class="rh" style="top:146px;height:20px;padding-top:-1px;line-height:20px;">8</div>
<div class="rh" style="top:166px;height:20px;padding-top:-1px;line-height:20px;">9</div>
<div class="rh" style="top:186px;height:20px;padding-top:-1px;line-height:20px;">10</div>
<div class="rh" style="top:206px;height:22px;padding-top:1px;line-height:20px;">11</div>
<div class="rh" style="top:228px;height:22px;padding-top:1px;line-height:20px;">12</div>
<div class="rh" style="top:250px;height:22px;padding-top:1px;line-height:20px;">13</div>
<div class="rh" style="top:272px;height:22px;padding-top:1px;line-height:20px;">14</div>
<div class="rh" style="top:294px;height:22px;padding-top:1px;line-height:20px;">15</div>
<div class="rh" style="top:316px;height:22px;padding-top:1px;line-height:20px;">16</div>
<div class="rh" style="top:338px;height:22px;padding-top:1px;line-height:20px;">17</div>
<div class="rh" style="top:360px;height:22px;padding-top:1px;line-height:20px;">18</div>
<div class="rh" style="top:382px;height:22px;padding-top:1px;line-height:20px;background:#d2d2d2;color:#217346;border-right:2px solid #217346;">19</div>
<div class="rh" style="top:404px;height:22px;padding-top:1px;line-height:20px;">20</div>
<div class="rh" style="top:426px;height:22px;padding-top:1px;line-height:20px;">21</div>
<div class="rh" style="top:448px;height:22px;padding-top:1px;line-height:20px;">22</div>
<div class="rh" style="top:470px;height:22px;padding-top:1px;line-height:20px;">23</div>
<div class="rh" style="top:492px;height:22px;padding-top:1px;line-height:20px;">24</div>
<div class="rh" style="top:514px;height:22px;padding-top:1px;line-height:20px;">25</div>
<div class="rh" style="top:536px;height:22px;padding-top:1px;line-height:20px;">26</div>
<div class="rh" style="top:558px;height:22px;padding-top:1px;line-height:20px;">27</div>
<div class="rh" style="top:580px;height:22px;padding-top:1px;line-height:20px;">28</div>
<div class="rh" style="top:602px;height:22px;padding-top:1px;line-height:20px;">29</div>
<div class="rh" style="top:624px;height:22px;padding-top:1px;line-height:20px;">30</div>
<div class="rh" style="top:646px;height:22px;padding-top:1px;line-height:20px;">31</div>
<div class="rh" style="top:668px;height:22px;padding-top:1px;line-height:20px;">32</div>
<div class="rh" style="top:690px;height:22px;padding-top:1px;line-height:20px;">33</div>
<div class="rh" style="top:712px;height:22px;padding-top:1px;line-height:20px;">34</div>
</div>
<div class="a" id="grid">
<div class="a" style="left:71px;top:20px;width:327px;height:128px;background:#000"></div>
<div class="a" style="left:73px;top:22px;width:323px;height:99px;background:#404040"></div>
<div class="a" style="left:73px;top:123px;width:323px;height:23px;background:#6666ff"></div>
<div class="a" style="left:72px;top:91px;width:28px;height:26px;background:#fff"></div>
<div class="a" style="left:74px;top:97px;width:9px;height:9px;border:1px solid #777;border-right-color:#ddd;border-bottom-color:#ddd;background:#fff"></div>
<div class="t" style="left:75px;top:95px;font-size:11px;color:#000;font-weight:bold">&#10003;</div>
<div class="a" style="left:73px;top:42px;width:0;height:0;border-right:5px solid transparent;border-top:5px solid #107c10"></div>
<div class="t" style="left:73px;width:323px;top:26px;text-align:center;color:#fff;font-weight:bold;font-size:12.2px;letter-spacing:0.2px;margin-left:0px">PT. KIKA TUMBUH BAHAGIA</div>
<div class="t" style="left:73px;width:323px;top:46px;text-align:center;color:#fff;font-weight:bold;font-size:12.2px;letter-spacing:0.2px;margin-left:0px">0286562426034000</div>
<div class="t" style="left:73px;width:323px;top:66px;text-align:center;color:#fff;font-weight:bold;font-size:12.2px;letter-spacing:0.2px;margin-left:-9px">JALAN PESING POGLAR (POOL PPD) NO.8RT 005</div>
<div class="t" style="left:73px;width:323px;top:106px;text-align:center;color:#fff;font-weight:bold;font-size:12.2px;letter-spacing:0.75px;margin-left:0px">Tanggal Terdaftar 09 September 2024</div>
<div class="t" style="left:73px;width:323px;top:127px;text-align:center;color:#fff;font-weight:bold;font-size:17.3px;font-family:'Liberation Serif',serif">Daftar BP 21 Karyawan 2025</div>
<div class="c " style="left:633px;top:206px;width:201px;height:22px;line-height:23px;text-align:right;font-weight:bold;padding-right:7px;font-size:14.4px;letter-spacing:0.1px">20.500.000</div>
<div class="c " style="left:834px;top:206px;width:129px;height:22px;line-height:23px;text-align:right;font-weight:bold;padding-right:9px;font-size:14.4px">1</div>
<div class="c " style="left:963px;top:206px;width:192px;height:22px;line-height:23px;text-align:right;font-weight:bold;padding-right:8px;font-size:14.4px;letter-spacing:0.1px">28.400</div>
<div class="a" style="left:0;top:228px;width:1587px;height:22px;background:#6666ff"></div>
<div class="c " style="left:0px;top:228px;width:72px;height:22px;line-height:23px;text-align:left;letter-spacing:0.1px;font-size:13.5px;line-height:23px;padding-left:3.8px;">Nama Ob</div>
<div class="fb" style="left:56px;top:232px"></div>
<div class="c " style="left:72px;top:228px;width:72px;height:22px;line-height:23px;text-align:left;letter-spacing:0.395px;font-size:13.5px;line-height:23px;padding-left:3.7px;">NO.</div>
<div class="fb" style="left:128px;top:232px"></div>
<div class="c " style="left:144px;top:228px;width:72px;height:22px;line-height:23px;text-align:left;letter-spacing:0.1px;font-size:13.5px;line-height:23px;padding-left:3.9px;">NIK/NPW</div>
<div class="fb" style="left:200px;top:232px"></div>
<div class="c " style="left:216px;top:228px;width:181px;height:22px;line-height:23px;text-align:left;letter-spacing:0.596px;font-size:13.5px;line-height:23px;padding-left:3.7px;">NAMA</div>
<div class="fb" style="left:381px;top:232px"></div>
<div class="c " style="left:397px;top:228px;width:72px;height:22px;line-height:23px;text-align:left;letter-spacing:0.1px;font-size:13.5px;line-height:23px;padding-left:3.9px;">NOMOR</div>
<div class="fb" style="left:453px;top:232px"></div>
<div class="c " style="left:469px;top:228px;width:92px;height:22px;line-height:23px;text-align:left;letter-spacing:0.1px;font-size:13.5px;line-height:23px;padding-left:3.7px;">TANGGAL B</div>
<div class="fb" style="left:545px;top:232px"></div>
<div class="c " style="left:561px;top:228px;width:72px;height:22px;line-height:23px;text-align:left;letter-spacing:0.1px;font-size:13.5px;line-height:23px;padding-left:3.8px;">KODE OB</div>
<div class="fb" style="left:617px;top:232px"></div>
<div class="c " style="left:633px;top:228px;width:201px;height:22px;line-height:23px;text-align:left;letter-spacing:-0.091px;font-size:13.5px;line-height:23px;padding-left:8.1px;">PENGHASILAN BRUTO (Rp)</div>
<div class="fb" style="left:818px;top:232px"></div>
<div class="c " style="left:834px;top:228px;width:129px;height:22px;line-height:23px;text-align:left;letter-spacing:-0.218px;font-size:13.5px;line-height:23px;padding-left:4.1px;">TARIF PAJAK (%)</div>
<div class="fb" style="left:947px;top:232px"></div>
<div class="c " style="left:963px;top:228px;width:192px;height:22px;line-height:23px;text-align:left;letter-spacing:-0.243px;font-size:13.5px;line-height:23px;padding-left:8.1px;">PAJAK PENGHASILAN (Rp)</div>
<div class="fb" style="left:1139px;top:232px"></div>
<div class="c " style="left:1155px;top:228px;width:72px;height:22px;line-height:23px;text-align:left;letter-spacing:0.1px;font-size:13.5px;line-height:23px;padding-left:3.4px;">FASILITA</div>
<div class="fb" style="left:1211px;top:232px"></div>
<div class="c " style="left:1227px;top:228px;width:72px;height:22px;line-height:23px;text-align:left;letter-spacing:0.1px;font-size:13.5px;line-height:23px;padding-left:3.4px;">NEGARA</div>
<div class="fb" style="left:1283px;top:232px"></div>
<div class="c " style="left:1299px;top:228px;width:72px;height:22px;line-height:23px;text-align:left;letter-spacing:0.1px;font-size:13.5px;line-height:23px;padding-left:3.3px;">ID TEMP</div>
<div class="fb" style="left:1355px;top:232px"></div>
<div class="c " style="left:1371px;top:228px;width:72px;height:22px;line-height:23px;text-align:left;letter-spacing:-0.84px;font-size:13.5px;line-height:23px;padding-left:3.5px;">KAP-KJS</div>
<div class="fb" style="left:1427px;top:232px"></div>
<div class="c " style="left:1443px;top:228px;width:72px;height:22px;line-height:23px;text-align:left;letter-spacing:-0.328px;font-size:13.5px;line-height:23px;padding-left:3.7px;">STATUS</div>
<div class="fb" style="left:1499px;top:232px"></div>
<div class="c " style="left:1515px;top:228px;width:72px;height:22px;line-height:23px;text-align:left;letter-spacing:0.009px;font-size:13.5px;line-height:23px;padding-left:3.9px;">MASA</div>
<div class="fb" style="left:1571px;top:232px"></div>
<div class="fb" style="left:1630px;top:232px"></div>
<div class="fb" style="left:1691px;top:232px"></div>
<div class="fb" style="left:1752px;top:232px"></div>
<div class="fb" style="left:1813px;top:232px"></div>
<div class="c cb" style="left:0px;top:250px;width:72px;height:22px;line-height:23px;text-align:left;padding-left:4px;width:144px">Penghasilan yang diterima</div>
<div class="c " style="left:144px;top:250px;width:72px;height:22px;line-height:23px;text-align:right;letter-spacing:-0.15px;">3,28E+15</div>
<div class="c " style="left:216px;top:250px;width:181px;height:22px;line-height:23px;text-align:left;word-spacing:2px;letter-spacing:-0.705px;">REZA AKMAL ZAHRAN</div>
<div class="c " style="left:397px;top:250px;width:72px;height:22px;line-height:23px;text-align:left;letter-spacing:-0.2px;">2504Y91Y8</div>
<div class="c " style="left:469px;top:250px;width:92px;height:22px;line-height:23px;text-align:right;letter-spacing:0.45px;">15/09/2025</div>
<div class="c " style="left:561px;top:250px;width:72px;height:22px;line-height:23px;text-align:left;letter-spacing:0;">21-100-01</div>
<div class="c " style="left:633px;top:250px;width:201px;height:22px;line-height:23px;text-align:right;padding-right:7px;letter-spacing:0.1px;">1.300.000</div>
<div class="c " style="left:834px;top:250px;width:129px;height:22px;line-height:23px;text-align:right;letter-spacing:0;">0</div>
<div class="c " style="left:963px;top:250px;width:192px;height:22px;line-height:23px;text-align:right;letter-spacing:0;">0</div>
<div class="c " style="left:1155px;top:250px;width:72px;height:22px;line-height:23px;text-align:left;letter-spacing:0;">Tanpa Fasilitas</div>
<div class="c " style="left:1227px;top:250px;width:72px;height:22px;line-height:23px;text-align:left;letter-spacing:0;">Indonesia</div>
<div class="c " style="left:1299px;top:250px;width:72px;height:22px;line-height:23px;text-align:right;letter-spacing:-0.15px;">2,87E+20</div>
<div class="c " style="left:1371px;top:250px;width:72px;height:22px;line-height:23px;text-align:left;letter-spacing:0.4px;">411121-100</div>
<div class="c " style="left:1443px;top:250px;width:72px;height:22px;line-height:23px;text-align:left;letter-spacing:0.1px;">Normal</div>
<div class="c " style="left:1515px;top:250px;width:72px;height:22px;line-height:23px;text-align:right;font-weight:bold;font-size:13px;letter-spacing:0;padding-right:2px">8</div>
<div class="c cb" style="left:0px;top:272px;width:72px;height:22px;line-height:23px;text-align:left;padding-left:4px;width:144px">Penghasilan yang diterima</div>
<div class="c " style="left:144px;top:272px;width:72px;height:22px;line-height:23px;text-align:right;letter-spacing:-0.15px;">3,28E+15</div>
<div class="c " style="left:216px;top:272px;width:181px;height:22px;line-height:23px;text-align:left;word-spacing:2px;letter-spacing:-0.705px;">REZA AKMAL ZAHRAN</div>
<div class="c " style="left:397px;top:272px;width:72px;height:22px;line-height:23px;text-align:left;letter-spacing:-0.2px;">2505KHPKI</div>
<div class="c " style="left:469px;top:272px;width:92px;height:22px;line-height:23px;text-align:right;letter-spacing:0.45px;">08/10/2025</div>
<div class="c " style="left:561px;top:272px;width:72px;height:22px;line-height:23px;text-align:left;letter-spacing:0;">21-100-01</div>
<div class="c " style="left:633px;top:272px;width:201px;height:22px;line-height:23px;text-align:right;padding-right:7px;letter-spacing:0.1px;">5.100.000</div>
<div class="c " style="left:834px;top:272px;width:129px;height:22px;line-height:23px;text-align:right;letter-spacing:0;">0</div>
<div class="c " style="left:963px;top:272px;width:192px;height:22px;line-height:23px;text-align:right;letter-spacing:0;">0</div>
<div class="c " style="left:1155px;top:272px;width:72px;height:22px;line-height:23px;text-align:left;letter-spacing:0;">Tanpa Fasilitas</div>
<div class="c " style="left:1227px;top:272px;width:72px;height:22px;line-height:23px;text-align:left;letter-spacing:0;">Indonesia</div>
<div class="c " style="left:1299px;top:272px;width:72px;height:22px;line-height:23px;text-align:right;letter-spacing:-0.15px;">2,87E+20</div>
<div class="c " style="left:1371px;top:272px;width:72px;height:22px;line-height:23px;text-align:left;letter-spacing:0.4px;">411121-100</div>
<div class="c " style="left:1443px;top:272px;width:72px;height:22px;line-height:23px;text-align:left;letter-spacing:0.1px;">Normal</div>
<div class="c " style="left:1515px;top:272px;width:72px;height:22px;line-height:23px;text-align:right;font-weight:bold;font-size:13px;letter-spacing:0;padding-right:2px">9</div>
<div class="c cb" style="left:0px;top:294px;width:72px;height:22px;line-height:23px;text-align:left;padding-left:4px;width:144px">Penghasilan yang diterima</div>
<div class="c " style="left:144px;top:294px;width:72px;height:22px;line-height:23px;text-align:right;letter-spacing:-0.15px;">3,18E+15</div>
<div class="c " style="left:216px;top:294px;width:181px;height:22px;line-height:23px;text-align:left;word-spacing:2px;letter-spacing:-0.802px;">VERONICA KIDUNG LARASA</div>
<div class="c " style="left:397px;top:294px;width:72px;height:22px;line-height:23px;text-align:left;letter-spacing:-0.2px;">2505KHPH</div>
<div class="c " style="left:469px;top:294px;width:92px;height:22px;line-height:23px;text-align:right;letter-spacing:0.45px;">08/10/2025</div>
<div class="c " style="left:561px;top:294px;width:72px;height:22px;line-height:23px;text-align:left;letter-spacing:0;">21-100-01</div>
<div class="c " style="left:633px;top:294px;width:201px;height:22px;line-height:23px;text-align:right;padding-right:7px;letter-spacing:0.1px;">2.880.000</div>
<div class="c " style="left:834px;top:294px;width:129px;height:22px;line-height:23px;text-align:right;letter-spacing:0;">0</div>
<div class="c " style="left:963px;top:294px;width:192px;height:22px;line-height:23px;text-align:right;letter-spacing:0;">0</div>
<div class="c " style="left:1155px;top:294px;width:72px;height:22px;line-height:23px;text-align:left;letter-spacing:0;">Tanpa Fasilitas</div>
<div class="c " style="left:1227px;top:294px;width:72px;height:22px;line-height:23px;text-align:left;letter-spacing:0;">Indonesia</div>
<div class="c " style="left:1299px;top:294px;width:72px;height:22px;line-height:23px;text-align:right;letter-spacing:-0.15px;">2,87E+20</div>
<div class="c " style="left:1371px;top:294px;width:72px;height:22px;line-height:23px;text-align:left;letter-spacing:0.4px;">411121-100</div>
<div class="c " style="left:1443px;top:294px;width:72px;height:22px;line-height:23px;text-align:left;letter-spacing:0.1px;">Normal</div>
<div class="c " style="left:1515px;top:294px;width:72px;height:22px;line-height:23px;text-align:right;font-weight:bold;font-size:13px;letter-spacing:0;padding-right:2px">9</div>
<div class="c cb" style="left:0px;top:316px;width:72px;height:22px;line-height:23px;text-align:left;padding-left:4px;width:144px">Penghasilan yang diterima</div>
<div class="c " style="left:144px;top:316px;width:72px;height:22px;line-height:23px;text-align:right;letter-spacing:-0.15px;">3,18E+15</div>
<div class="c " style="left:216px;top:316px;width:181px;height:22px;line-height:23px;text-align:left;word-spacing:2px;letter-spacing:-0.802px;">VERONICA KIDUNG LARASA</div>
<div class="c " style="left:397px;top:316px;width:72px;height:22px;line-height:23px;text-align:left;letter-spacing:-0.2px;">2506AIQL4</div>
<div class="c " style="left:469px;top:316px;width:92px;height:22px;line-height:23px;text-align:right;letter-spacing:0.45px;">10/11/2025</div>
<div class="c " style="left:561px;top:316px;width:72px;height:22px;line-height:23px;text-align:left;letter-spacing:0;">21-100-01</div>
<div class="c " style="left:633px;top:316px;width:201px;height:22px;line-height:23px;text-align:right;padding-right:7px;letter-spacing:0.1px;">4.000.000</div>
<div class="c " style="left:834px;top:316px;width:129px;height:22px;line-height:23px;text-align:right;letter-spacing:0;">0</div>
<div class="c " style="left:963px;top:316px;width:192px;height:22px;line-height:23px;text-align:right;letter-spacing:0;">0</div>
<div class="c " style="left:1155px;top:316px;width:72px;height:22px;line-height:23px;text-align:left;letter-spacing:0;">Tanpa Fasilitas</div>
<div class="c " style="left:1227px;top:316px;width:72px;height:22px;line-height:23px;text-align:left;letter-spacing:0;">Indonesia</div>
<div class="c " style="left:1299px;top:316px;width:72px;height:22px;line-height:23px;text-align:right;letter-spacing:-0.15px;">2,87E+20</div>
<div class="c " style="left:1371px;top:316px;width:72px;height:22px;line-height:23px;text-align:left;letter-spacing:0.4px;">411121-100</div>
<div class="c " style="left:1443px;top:316px;width:72px;height:22px;line-height:23px;text-align:left;letter-spacing:0.1px;">Normal</div>
<div class="c " style="left:1515px;top:316px;width:72px;height:22px;line-height:23px;text-align:right;font-weight:bold;font-size:13px;letter-spacing:0;padding-right:2px">10</div>
<div class="c cb" style="left:0px;top:338px;width:72px;height:22px;line-height:23px;text-align:left;padding-left:4px;width:144px">Penghasilan yang diterima</div>
<div class="c " style="left:144px;top:338px;width:72px;height:22px;line-height:23px;text-align:right;letter-spacing:-0.15px;">3,28E+15</div>
<div class="c " style="left:216px;top:338px;width:181px;height:22px;line-height:23px;text-align:left;word-spacing:2px;letter-spacing:-0.705px;">REZA AKMAL ZAHRAN</div>
<div class="c " style="left:397px;top:338px;width:72px;height:22px;line-height:23px;text-align:left;letter-spacing:-0.2px;">2506AIR16</div>
<div class="c " style="left:469px;top:338px;width:92px;height:22px;line-height:23px;text-align:left;letter-spacing:0.45px;">10/11/2025</div>
<div class="c " style="left:561px;top:338px;width:72px;height:22px;line-height:23px;text-align:left;letter-spacing:0;">21-100-01</div>
<div class="c " style="left:633px;top:338px;width:201px;height:22px;line-height:23px;text-align:right;padding-right:7px;letter-spacing:0.1px;">5.680.000</div>
<div class="c " style="left:834px;top:338px;width:129px;height:22px;line-height:23px;text-align:right;letter-spacing:0;">0,5</div>
<div class="c " style="left:963px;top:338px;width:192px;height:22px;line-height:23px;text-align:right;letter-spacing:0;">28.400</div>
<div class="c " style="left:1155px;top:338px;width:72px;height:22px;line-height:23px;text-align:left;letter-spacing:0;">Tanpa Fasilitas</div>
<div class="c " style="left:1227px;top:338px;width:72px;height:22px;line-height:23px;text-align:left;letter-spacing:0;">Indonesia</div>
<div class="c " style="left:1299px;top:338px;width:72px;height:22px;line-height:23px;text-align:right;letter-spacing:-0.15px;">2,87E+20</div>
<div class="c " style="left:1371px;top:338px;width:72px;height:22px;line-height:23px;text-align:left;letter-spacing:0.4px;">411121-100</div>
<div class="c " style="left:1443px;top:338px;width:72px;height:22px;line-height:23px;text-align:left;letter-spacing:0.1px;">Normal</div>
<div class="c " style="left:1515px;top:338px;width:72px;height:22px;line-height:23px;text-align:right;font-weight:bold;font-size:13px;letter-spacing:0;padding-right:2px">10</div>
<div class="c cb" style="left:0px;top:360px;width:72px;height:22px;line-height:23px;text-align:left;padding-left:4px;width:144px">Penghasilan yang diterima</div>
<div class="c " style="left:144px;top:360px;width:72px;height:22px;line-height:23px;text-align:right;letter-spacing:-0.15px;">9,99E+15</div>
<div class="c " style="left:216px;top:360px;width:181px;height:22px;line-height:23px;text-align:left;word-spacing:2px;letter-spacing:-0.791px;">PENERIMA PENGHASILAN#3</div>
<div class="c " style="left:397px;top:360px;width:72px;height:22px;line-height:23px;text-align:left;letter-spacing:-0.2px;">2506AIQ68</div>
<div class="c " style="left:469px;top:360px;width:92px;height:22px;line-height:23px;text-align:left;letter-spacing:0.45px;">10/11/2025</div>
<div class="c " style="left:561px;top:360px;width:72px;height:22px;line-height:23px;text-align:left;letter-spacing:0;">21-100-01</div>
<div class="c " style="left:633px;top:360px;width:201px;height:22px;line-height:23px;text-align:right;padding-right:7px;letter-spacing:0.1px;">1.540.000</div>
<div class="c " style="left:834px;top:360px;width:129px;height:22px;line-height:23px;text-align:right;letter-spacing:0;">0</div>
<div class="c " style="left:963px;top:360px;width:192px;height:22px;line-height:23px;text-align:right;letter-spacing:0;">0</div>
<div class="c " style="left:1155px;top:360px;width:72px;height:22px;line-height:23px;text-align:left;letter-spacing:0;">Tanpa Fasilitas</div>
<div class="c " style="left:1227px;top:360px;width:72px;height:22px;line-height:23px;text-align:left;letter-spacing:0;">Indonesia</div>
<div class="c " style="left:1299px;top:360px;width:72px;height:22px;line-height:23px;text-align:right;letter-spacing:-0.15px;">2,87E+20</div>
<div class="c " style="left:1371px;top:360px;width:72px;height:22px;line-height:23px;text-align:left;letter-spacing:0.4px;">411121-100</div>
<div class="c " style="left:1443px;top:360px;width:72px;height:22px;line-height:23px;text-align:left;letter-spacing:0.1px;">Normal</div>
<div class="c " style="left:1515px;top:360px;width:72px;height:22px;line-height:23px;text-align:right;font-weight:bold;font-size:13px;letter-spacing:0;padding-right:2px">10</div>
<div class="a" style="left:0;top:734px;width:0;height:0;border-right:7px solid transparent;border-top:7px solid #107c10"></div>
<div class="c cb" style="left:0px;top:382px;width:72px;height:22px;line-height:23px;text-align:center;letter-spacing:0.8px;padding-left:5px;line-height:25px">#N/A</div>
<div class="a" style="left:0;top:382px;width:0;height:0;border-right:7px solid transparent;border-top:7px solid #107c10"></div>
<div class="c cb" style="left:0px;top:404px;width:72px;height:22px;line-height:23px;text-align:center;letter-spacing:0.8px;padding-left:5px;line-height:25px">#N/A</div>
<div class="a" style="left:0;top:404px;width:0;height:0;border-right:7px solid transparent;border-top:7px solid #107c10"></div>
<div class="c cb" style="left:0px;top:426px;width:72px;height:22px;line-height:23px;text-align:center;letter-spacing:0.8px;padding-left:5px;line-height:25px">#N/A</div>
<div class="a" style="left:0;top:426px;width:0;height:0;border-right:7px solid transparent;border-top:7px solid #107c10"></div>
<div class="c cb" style="left:0px;top:448px;width:72px;height:22px;line-height:23px;text-align:center;letter-spacing:0.8px;padding-left:5px;line-height:25px">#N/A</div>
<div class="a" style="left:0;top:448px;width:0;height:0;border-right:7px solid transparent;border-top:7px solid #107c10"></div>
<div class="c cb" style="left:0px;top:470px;width:72px;height:22px;line-height:23px;text-align:center;letter-spacing:0.8px;padding-left:5px;line-height:25px">#N/A</div>
<div class="a" style="left:0;top:470px;width:0;height:0;border-right:7px solid transparent;border-top:7px solid #107c10"></div>
<div class="c cb" style="left:0px;top:492px;width:72px;height:22px;line-height:23px;text-align:center;letter-spacing:0.8px;padding-left:5px;line-height:25px">#N/A</div>
<div class="a" style="left:0;top:492px;width:0;height:0;border-right:7px solid transparent;border-top:7px solid #107c10"></div>
<div class="c cb" style="left:0px;top:514px;width:72px;height:22px;line-height:23px;text-align:center;letter-spacing:0.8px;padding-left:5px;line-height:25px">#N/A</div>
<div class="a" style="left:0;top:514px;width:0;height:0;border-right:7px solid transparent;border-top:7px solid #107c10"></div>
<div class="c cb" style="left:0px;top:536px;width:72px;height:22px;line-height:23px;text-align:center;letter-spacing:0.8px;padding-left:5px;line-height:25px">#N/A</div>
<div class="a" style="left:0;top:536px;width:0;height:0;border-right:7px solid transparent;border-top:7px solid #107c10"></div>
<div class="c cb" style="left:0px;top:558px;width:72px;height:22px;line-height:23px;text-align:center;letter-spacing:0.8px;padding-left:5px;line-height:25px">#N/A</div>
<div class="a" style="left:0;top:558px;width:0;height:0;border-right:7px solid transparent;border-top:7px solid #107c10"></div>
<div class="c cb" style="left:0px;top:580px;width:72px;height:22px;line-height:23px;text-align:center;letter-spacing:0.8px;padding-left:5px;line-height:25px">#N/A</div>
<div class="a" style="left:0;top:580px;width:0;height:0;border-right:7px solid transparent;border-top:7px solid #107c10"></div>
<div class="c cb" style="left:0px;top:602px;width:72px;height:22px;line-height:23px;text-align:center;letter-spacing:0.8px;padding-left:5px;line-height:25px">#N/A</div>
<div class="a" style="left:0;top:602px;width:0;height:0;border-right:7px solid transparent;border-top:7px solid #107c10"></div>
<div class="c cb" style="left:0px;top:624px;width:72px;height:22px;line-height:23px;text-align:center;letter-spacing:0.8px;padding-left:5px;line-height:25px">#N/A</div>
<div class="a" style="left:0;top:624px;width:0;height:0;border-right:7px solid transparent;border-top:7px solid #107c10"></div>
<div class="c cb" style="left:0px;top:646px;width:72px;height:22px;line-height:23px;text-align:center;letter-spacing:0.8px;padding-left:5px;line-height:25px">#N/A</div>
<div class="a" style="left:0;top:646px;width:0;height:0;border-right:7px solid transparent;border-top:7px solid #107c10"></div>
<div class="c cb" style="left:0px;top:668px;width:72px;height:22px;line-height:23px;text-align:center;letter-spacing:0.8px;padding-left:5px;line-height:25px">#N/A</div>
<div class="a" style="left:0;top:668px;width:0;height:0;border-right:7px solid transparent;border-top:7px solid #107c10"></div>
<div class="c cb" style="left:0px;top:690px;width:72px;height:22px;line-height:23px;text-align:center;letter-spacing:0.8px;padding-left:5px;line-height:25px">#N/A</div>
<div class="a" style="left:0;top:690px;width:0;height:0;border-right:7px solid transparent;border-top:7px solid #107c10"></div>
<div class="c cb" style="left:0px;top:712px;width:72px;height:22px;line-height:23px;text-align:center;letter-spacing:0.8px;padding-left:5px;line-height:25px">#N/A</div>
<div class="a" style="left:0;top:712px;width:0;height:0;border-right:7px solid transparent;border-top:7px solid #107c10"></div>
<div class="hl" style="left:0;top:271px;width:1587px"></div>
<div class="hl" style="left:0;top:293px;width:1587px"></div>
<div class="hl" style="left:0;top:315px;width:1587px"></div>
<div class="hl" style="left:0;top:337px;width:1587px"></div>
<div class="hl" style="left:0;top:359px;width:1587px"></div>
<div class="hl" style="left:0;top:381px;width:1587px"></div>
<div class="hl" style="left:0;top:403px;width:1587px"></div>
<div class="hl" style="left:0;top:425px;width:1587px"></div>
<div class="hl" style="left:0;top:447px;width:1587px"></div>
<div class="hl" style="left:0;top:469px;width:1587px"></div>
<div class="hl" style="left:0;top:491px;width:1587px"></div>
<div class="hl" style="left:0;top:513px;width:1587px"></div>
<div class="hl" style="left:0;top:535px;width:1587px"></div>
<div class="hl" style="left:0;top:557px;width:1587px"></div>
<div class="hl" style="left:0;top:579px;width:1587px"></div>
<div class="hl" style="left:0;top:601px;width:1587px"></div>
<div class="hl" style="left:0;top:623px;width:1587px"></div>
<div class="hl" style="left:0;top:645px;width:1587px"></div>
<div class="hl" style="left:0;top:667px;width:1587px"></div>
<div class="hl" style="left:0;top:689px;width:1587px"></div>
<div class="hl" style="left:0;top:711px;width:1587px"></div>
<div class="hl" style="left:0;top:733px;width:1587px"></div>
<div class="vl" style="left:72px;top:381px;height:356px"></div>
<div class="vl" style="left:144px;top:249px;height:488px"></div>
<div class="vl" style="left:216px;top:249px;height:488px"></div>
<div class="vl" style="left:397px;top:249px;height:488px"></div>
<div class="vl" style="left:469px;top:249px;height:488px"></div>
<div class="vl" style="left:561px;top:249px;height:488px"></div>
<div class="vl" style="left:633px;top:249px;height:488px"></div>
<div class="vl" style="left:834px;top:249px;height:488px"></div>
<div class="vl" style="left:963px;top:249px;height:488px"></div>
<div class="vl" style="left:1155px;top:249px;height:488px"></div>
<div class="vl" style="left:1227px;top:249px;height:488px"></div>
<div class="vl" style="left:1299px;top:249px;height:488px"></div>
<div class="vl" style="left:1371px;top:249px;height:488px"></div>
<div class="vl" style="left:1443px;top:249px;height:488px"></div>
<div class="vl" style="left:1515px;top:249px;height:488px"></div>
<div class="vl" style="left:1587px;top:249px;height:488px"></div>
<div class="vl" style="left:72px;top:228px;height:22px"></div>
<div class="vl" style="left:144px;top:228px;height:22px"></div>
<div class="vl" style="left:216px;top:228px;height:22px"></div>
<div class="vl" style="left:397px;top:228px;height:22px"></div>
<div class="vl" style="left:469px;top:228px;height:22px"></div>
<div class="vl" style="left:561px;top:228px;height:22px"></div>
<div class="vl" style="left:633px;top:228px;height:22px"></div>
<div class="vl" style="left:834px;top:228px;height:22px"></div>
<div class="vl" style="left:963px;top:228px;height:22px"></div>
<div class="vl" style="left:1155px;top:228px;height:22px"></div>
<div class="vl" style="left:1227px;top:228px;height:22px"></div>
<div class="vl" style="left:1299px;top:228px;height:22px"></div>
<div class="vl" style="left:1371px;top:228px;height:22px"></div>
<div class="vl" style="left:1443px;top:228px;height:22px"></div>
<div class="vl" style="left:1515px;top:228px;height:22px"></div>
<div class="vl" style="left:1587px;top:228px;height:22px"></div>
<div class="hl" style="left:0;top:227px;width:1587px"></div>
<div class="a" style="left:216px;top:0;width:1px;height:736px;background:#a6a6a6"></div>
<div class="a" style="left:1587px;top:249px;width:287px;height:1px;background:#a6a6a6"></div>
<div class="a" style="left:144px;top:380px;width:73px;height:24px;border:2px solid #217346;box-shadow:inset 0 0 0 1px #e6e6e6"></div>
<div class="a" style="left:213px;top:400px;width:6px;height:6px;background:#217346;border:1px solid #e6e6e6"></div>
</div>
<div class="a" style="left:1902px;top:229px;width:15px;height:15px;background:#fff;border:1px solid #ababab"></div>
<div class="a" style="left:1905.5px;top:234px;width:0;height:0;border:4px solid transparent;border-bottom:5px solid #333;border-top:0"></div>
<div class="a" style="left:1902px;top:243px;width:15px;height:90px;background:#fff;border:1px solid #ababab"></div>
<div class="a" style="left:1902px;top:967px;width:15px;height:15px;background:#fff;border:1px solid #ababab"></div>
<div class="a" style="left:1905.5px;top:972px;width:0;height:0;border:4px solid transparent;border-top:5px solid #333;border-bottom:0"></div>
<div class="a" style="left:27px;top:992px;width:0;height:0;border:3.5px solid transparent;border-right:4px solid #c3c3c3;border-left:0"></div>
<div class="a" style="left:56px;top:992px;width:0;height:0;border:3.5px solid transparent;border-left:4px solid #c3c3c3;border-right:0"></div>
<div class="a" style="left:100px;top:986px;width:1px;height:20px;background:#b5b5b5"></div>
<div class="t" style="left:114px;top:990px;font-size:12.8px;color:#444;letter-spacing:-0.05px">Kode Objek PPh 21</div>
<div class="a" style="left:241px;top:986px;width:1px;height:20px;background:#b5b5b5"></div>
<div class="a" style="left:244px;top:985px;width:61px;height:22px;background:#548235"></div>
<div class="t" style="left:244px;top:990px;width:61px;text-align:center;font-size:12px;color:#fff;letter-spacing:-0.1px">PPh 21</div>
<div class="a" style="left:307px;top:982px;width:161px;height:25px;background:linear-gradient(#ffffff 30%,#d9ead3);border-bottom:2px solid #217346;box-shadow:1px 0 0 #c0c0c0,-1px 0 0 #c0c0c0"></div>
<div class="t" style="left:307px;top:990px;width:161px;text-align:center;font-size:12.8px;color:#217346;font-weight:bold;letter-spacing:-0.15px">Daftar BP21 Karyawan</div>
<div class="a" style="left:470px;top:985px;width:183px;height:22px;background:#70ad47"></div>
<div class="t" style="left:470px;top:990px;width:183px;text-align:center;font-size:12.8px;color:#222">BP21 Final Atau tidak final</div>
<div class="a" style="left:655px;top:986px;width:1px;height:20px;background:#b5b5b5"></div>
<div class="a" style="left:658px;top:985px;width:100px;height:22px;background:#ed7d31"></div>
<div class="t" style="left:658px;top:990px;width:100px;text-align:center;font-size:12.8px;color:#222">PPh Unifikasi</div>
<div class="a" style="left:760px;top:986px;width:1px;height:20px;background:#b5b5b5"></div>
<svg class="a" style="left:793px;top:987px" width="17" height="17" viewBox="0 0 17 17" fill="none" stroke="#6a6a6a" stroke-width="1.2"><circle cx="8.5" cy="8.5" r="7.3"/><path d="M8.5 4.5v8M4.5 8.5h8" stroke-width="1.6"/></svg>
<div class="a" style="left:1687px;top:990px;width:2px;height:2px;background:#b0b0b0"></div>
<div class="a" style="left:1687px;top:994px;width:2px;height:2px;background:#b0b0b0"></div>
<div class="a" style="left:1687px;top:998px;width:2px;height:2px;background:#b0b0b0"></div>
<div class="a" style="left:1704px;top:989px;width:15px;height:15px;background:#fff;border:1px solid #ababab"></div>
<div class="a" style="left:1708px;top:992.5px;width:0;height:0;border:4px solid transparent;border-right:5px solid #333;border-left:0"></div>
<div class="a" style="left:1718px;top:989px;width:154px;height:15px;background:#fff;border:1px solid #ababab"></div>
<div class="a" style="left:1882px;top:989px;width:15px;height:15px;background:#fff;border:1px solid #ababab"></div>
<div class="a" style="left:1887px;top:992.5px;width:0;height:0;border:4px solid transparent;border-left:5px solid #333;border-right:0"></div>
<div class="t" style="left:7px;top:1016.7px;font-size:11.1px;color:#333;letter-spacing:0.02px">Select destination and press ENTER or choose Paste</div>
<div class="a" style="left:1620px;top:1010px;width:40px;height:22px;background:#dadada"></div>
<svg class="a" style="left:1632px;top:1015px" width="15" height="14" viewBox="0 0 15 14" fill="none" stroke="#444" stroke-width="1"><rect x="1" y="1" width="13" height="12"/><path d="M1 5h13M1 9h13M5.3 1v12M9.7 1v12"/></svg>
<svg class="a" style="left:1672px;top:1014.5px" width="15" height="14" viewBox="0 0 15 14" fill="none" stroke="#444" stroke-width="1"><rect x="1" y="1" width="13" height="12"/><rect x="4" y="3.5" width="7" height="7"/><path d="M5.5 5.5h4M5.5 7.5h4"/></svg>
<svg class="a" style="left:1712px;top:1014px" width="15" height="14" viewBox="0 0 15 14" fill="none" stroke="#444" stroke-width="1"><rect x="1" y="1" width="13" height="12"/><path d="M4.5 1v6.5h5.5V1"/></svg>
<div class="a" style="left:1746px;top:1021px;width:7px;height:1px;background:#555"></div>
<div class="a" style="left:1759px;top:1021px;width:100px;height:1px;background:#777"></div>
<div class="a" style="left:1807px;top:1016px;width:5px;height:11px;background:#444"></div>
<div class="a" style="left:1864px;top:1021px;width:8px;height:1px;background:#555"></div>
<div class="a" style="left:1867.5px;top:1017px;width:1px;height:8px;background:#555"></div>
<div class="t" style="left:1886px;top:1016.5px;font-size:11.4px;color:#444;letter-spacing:-0.2px">100%</div>
<div class="a" style="left:0;top:1032px;width:1920px;height:1px;background:#c9cad6"></div>
<svg class="a" style="left:17px;top:1038px" width="34" height="32" viewBox="0 0 34 32"><path d="M4 19c-1-4 2-6 4-6 1-4 5-6 9-4 4-1 8 2 7 6 3 0 4 5 0 6H6c-1 0-2-1-2-2z" fill="#b9cdf0" opacity=".85"/><path d="M18 20c0 0-3 4-3 6a3 3 0 0 0 6 0c0-2-3-6-3-6z" fill="#3b82f0"/><circle cx="21" cy="9" r="8" fill="#c42b1c"/></svg>
<div class="t" style="left:30px;top:1041px;width:16px;text-align:center;color:#fff;font-size:11.5px">2</div>
<div class="t" style="left:50px;top:1042px;color:#1b1b1b;font-size:12.2px">30°C</div>
<div class="t" style="left:50px;top:1058px;color:#555;font-size:12.2px;letter-spacing:0.1px">Hujan ringan</div>
<svg class="a" style="left:616px;top:1044px" width="25" height="25" viewBox="0 0 25 25"><defs><linearGradient id="wl" x1="0" y1="0" x2="1" y2="1"><stop offset="0" stop-color="#35c1f1"/><stop offset="1" stop-color="#0f6fd1"/></linearGradient></defs><rect x="0.5" y="0.5" width="11.3" height="11.3" fill="url(#wl)"/><rect x="12.8" y="0.5" width="11.3" height="11.3" fill="url(#wl)"/><rect x="0.5" y="12.8" width="11.3" height="11.3" fill="url(#wl)"/><rect x="12.8" y="12.8" width="11.3" height="11.3" fill="url(#wl)"/></svg>
<div class="a" style="left:654px;top:1040px;width:217px;height:32px;border-radius:16px;background:#f0f1f9;border:1px solid #d3d4e2"></div>
<svg class="a" style="left:663px;top:1047px" width="18" height="18" viewBox="0 0 18 18" fill="none" stroke="#222" stroke-width="1.7"><circle cx="7.8" cy="7.8" r="5.6"/><path d="M12 12l4.5 4.5"/></svg>
<div class="t" style="left:690px;top:1049px;color:#555;font-size:13.3px;letter-spacing:-0.1px">Search</div>
<svg class="a" style="left:822px;top:1042px" width="46" height="28" viewBox="0 0 46 28"><ellipse cx="22" cy="25" rx="20" ry="2" fill="#e8d6b5"/><path d="M6 8l4-5 3 1 2 4h14c4 0 6 3 6 6l2 6-2 1-3-6-1 9h-2l-1-8h-9l-1 8h-2l-1-9-3-4-4 1z" fill="#d9d9e3" stroke="#555" stroke-width=".8"/><path d="M12 5l2 6M15 8l1 7M19 8v8M23 8v8M27 8l1 8M30 9l2 6" stroke="#333" stroke-width="1.2" fill="none"/></svg>
<div class="a" style="left:892px;top:1045px;width:17px;height:16px;background:#f7f7f9;border-radius:2px"></div>
<div class="a" style="left:885px;top:1051px;width:18px;height:16px;background:#222;border-radius:2px"></div>
<div class="a" style="left:892px;top:1051px;width:11px;height:10px;background:#c9c9c9"></div>
<svg class="a" style="left:927px;top:1043px" width="28" height="28" viewBox="0 0 28 28"><path d="M14 2.5a11 11 0 0 0-9.4 16.7L3 25l6-1.6A11 11 0 1 0 14 2.5z" fill="#fff" stroke="#25a35a" stroke-width="2.4"/><path d="M10 8.5c-.8 0-1.6 1-1.6 2.3 0 3 4 7.4 7.8 7.8 1.5.1 2.6-.8 2.6-1.7l-2.6-1.5-1.2 1c-1.5-.5-3-2.1-3.6-3.6l1-1.2z" fill="#25a35a"/></svg>
<svg class="a" style="left:972px;top:1044px" width="26" height="26" viewBox="0 0 26 26"><defs><linearGradient id="eg" x1="0" y1="0" x2="1" y2="1"><stop offset="0" stop-color="#35c1a0"/><stop offset=".5" stop-color="#1b9de2"/><stop offset="1" stop-color="#0c59a4"/></linearGradient></defs><circle cx="13" cy="13" r="12" fill="url(#eg)"/><path d="M4 16c0-6 5-9 9-9 5 0 9 3 9 7 0 3-2 4-4 4-3 0-3-2-2-3 .5-1 0-4-3-4-4 0-6 4-5 8 1 3 4 5 7 5-6 1-11-3-11-8z" fill="#0b4f9a" opacity=".7"/><path d="M2 11C4 4 10 1 15 1.5c5 .5 9 4 9 9-2-3-5-5-10-5S5 7 2 11z" fill="#4fd675" opacity=".8"/></svg>
<svg class="a" style="left:1015px;top:1044px" width="28" height="26" viewBox="0 0 28 26"><path d="M1 4c0-1 1-2 2-2h7l3 3h12c1 0 2 1 2 2v15c0 1-1 2-2 2H3c-1 0-2-1-2-2z" fill="#f6b730"/><path d="M1 8h26v14c0 1-1 2-2 2H3c-1 0-2-1-2-2z" fill="#fcd558"/><rect x="7" y="15" width="14" height="8" rx="1.5" fill="#1b84d8"/></svg>
<svg class="a" style="left:1060px;top:1044px" width="26" height="26" viewBox="0 0 26 26"><circle cx="13" cy="13" r="12" fill="#fbc116"/><path d="M13 13L2.6 7A12 12 0 0 1 23.4 7z" fill="#e33b2e"/><path d="M13 13L2.6 7A12 12 0 0 0 10 24.6z" fill="#2ea24c"/><circle cx="13" cy="13" r="5.6" fill="#fff"/><circle cx="13" cy="13" r="4.4" fill="#3f82ee"/></svg>
<div class="a" style="left:1075px;top:1038px;width:15px;height:15px;border-radius:8px;background:#a8141d;border:2px solid #f6eef2"></div>
<svg class="a" style="left:1105px;top:1044px" width="25" height="25" viewBox="0 0 25 25"><circle cx="12.5" cy="12.5" r="12" fill="#1ed760"/><path d="M5.5 9c4.5-1.5 10-1 14 1.2M6.3 12.8c4-1.2 8.5-.7 12 1.3M7 16.3c3.3-.9 6.8-.5 9.7 1.1" fill="none" stroke="#121212" stroke-width="1.9" stroke-linecap="round"/></svg>
<svg class="a" style="left:1147px;top:1043px" width="28" height="28" viewBox="0 0 28 28"><rect x="1.5" y="2" width="16" height="15" rx="2" fill="#fff"/><rect x="3.5" y="4" width="12" height="11" fill="none" stroke="#c4311f" stroke-width="2" stroke-dasharray="2.6 1.6"/><path d="M14 8l4 12M24 12l-8 6" stroke="#8a8a8a" stroke-width="1.8"/><circle cx="24.5" cy="12" r="2.2" fill="none" stroke="#2f8fe6" stroke-width="1.8"/><circle cx="17" cy="22" r="2.2" fill="none" stroke="#2f8fe6" stroke-width="1.8"/></svg>
<svg class="a" style="left:1192px;top:1044px" width="26" height="26" viewBox="0 0 26 26"><circle cx="13" cy="13" r="12.5" fill="#e8324f"/><path d="M7.5 20L13 6l5.5 14" fill="none" stroke="#fff" stroke-width="2.6" stroke-linejoin="round"/></svg>
<div class="a" style="left:1230px;top:1037px;width:37px;height:39px;border-radius:4px;background:#eceefa;border:1px solid #e3e4f2"></div>
<svg class="a" style="left:1236px;top:1045px" width="26" height="24" viewBox="0 0 26 24"><rect x="7" y="0.5" width="18.5" height="23" rx="1.5" fill="#21a366"/><rect x="16" y="0.5" width="9.5" height="7.7" fill="#33c481"/><rect x="7" y="8.2" width="9" height="7.7" fill="#107c41"/><rect x="16" y="8.2" width="9.5" height="7.7" fill="#21a366"/><rect x="7" y="15.9" width="18.5" height="7.6" rx="1" fill="#185c37"/><rect x="0.5" y="5" width="13" height="14" rx="1.5" fill="#107c41"/><path d="M4 8.5l6 7M10 8.5l-6 7" stroke="#fff" stroke-width="1.9"/></svg>
<div class="a" style="left:1241px;top:1072px;width:16px;height:3px;border-radius:2px;background:#1a73d9"></div>
<svg class="a" style="left:1279px;top:1044px" width="26" height="26" viewBox="0 0 26 26"><circle cx="13" cy="13" r="12" fill="#fbc116"/><path d="M13 13L2.6 7A12 12 0 0 1 23.4 7z" fill="#e33b2e"/><path d="M13 13L2.6 7A12 12 0 0 0 10 24.6z" fill="#2ea24c"/><circle cx="13" cy="13" r="5.6" fill="#fff"/><circle cx="13" cy="13" r="4.4" fill="#3f82ee"/></svg>
<svg class="a" style="left:1296px;top:1041px" width="10" height="12" viewBox="0 0 10 12"><path d="M2 1l3 5 3-4-1 6-4 3z" fill="#9a9a9a" stroke="#666" stroke-width=".6"/></svg>
<div class="a" style="left:938px;top:1073px;width:6px;height:2px;border-radius:1px;background:#7a7a85"></div>
<div class="a" style="left:1026px;top:1073px;width:6px;height:2px;border-radius:1px;background:#7a7a85"></div>
<div class="a" style="left:1070px;top:1073px;width:6px;height:2px;border-radius:1px;background:#7a7a85"></div>
<div class="a" style="left:1114px;top:1073px;width:6px;height:2px;border-radius:1px;background:#7a7a85"></div>
<div class="a" style="left:1202px;top:1073px;width:6px;height:2px;border-radius:1px;background:#7a7a85"></div>
<svg class="a" style="left:1728px;top:1052px" width="12" height="8" viewBox="0 0 12 8" fill="none" stroke="#222" stroke-width="1.4"><path d="M1 7l5-5.5L11 7"/></svg>
<svg class="a" style="left:1757px;top:1048px" width="18" height="15" viewBox="0 0 18 15" fill="none" stroke="#222" stroke-width="1.3"><path d="M1 5.5c4.5-4.5 11.5-4.5 16 0M3.5 8.2c3-3 8-3 11 0M6 10.8c1.7-1.7 4.3-1.7 6 0"/><circle cx="9" cy="13" r="1" fill="#222" stroke="none"/></svg>
<svg class="a" style="left:1780px;top:1048px" width="18" height="15" viewBox="0 0 18 15" fill="none" stroke="#222" stroke-width="1.2"><path d="M1.5 5.5h2.5l3.5-3.5v11L4 9.5H1.5z"/><path d="M10 5c1.2 1.3 1.2 3.7 0 5M12.5 3c2.3 2.5 2.3 6.5 0 9"/></svg>
<div class="t" style="left:1780px;top:1043px;width:96px;text-align:right;color:#1b1b1b;font-size:11.8px">13:03</div>
<div class="t" style="left:1780px;top:1059px;width:96px;text-align:right;color:#1b1b1b;font-size:11.8px;letter-spacing:0.05px">31/01/2026</div>
<svg class="a" style="left:1884px;top:1047px" width="20" height="18" viewBox="0 0 20 18"><path d="M7.5 3a4.5 4.5 0 0 0-4.5 4.5v3.5l-1.8 2.5h12.6l-1.8-2.5V7.5A4.5 4.5 0 0 0 7.5 3zM5.8 14.8a1.7 1.7 0 0 0 3.4 0z" fill="#222"/><text x="6" y="10.5" font-size="5.5" font-family="Liberation Sans,sans-serif" fill="#e8e6f0" font-weight="bold">z</text><text x="10.5" y="6" font-size="7" font-family="Liberation Sans,sans-serif" fill="#222" font-weight="bold">z</text></svg>
</body></html>
